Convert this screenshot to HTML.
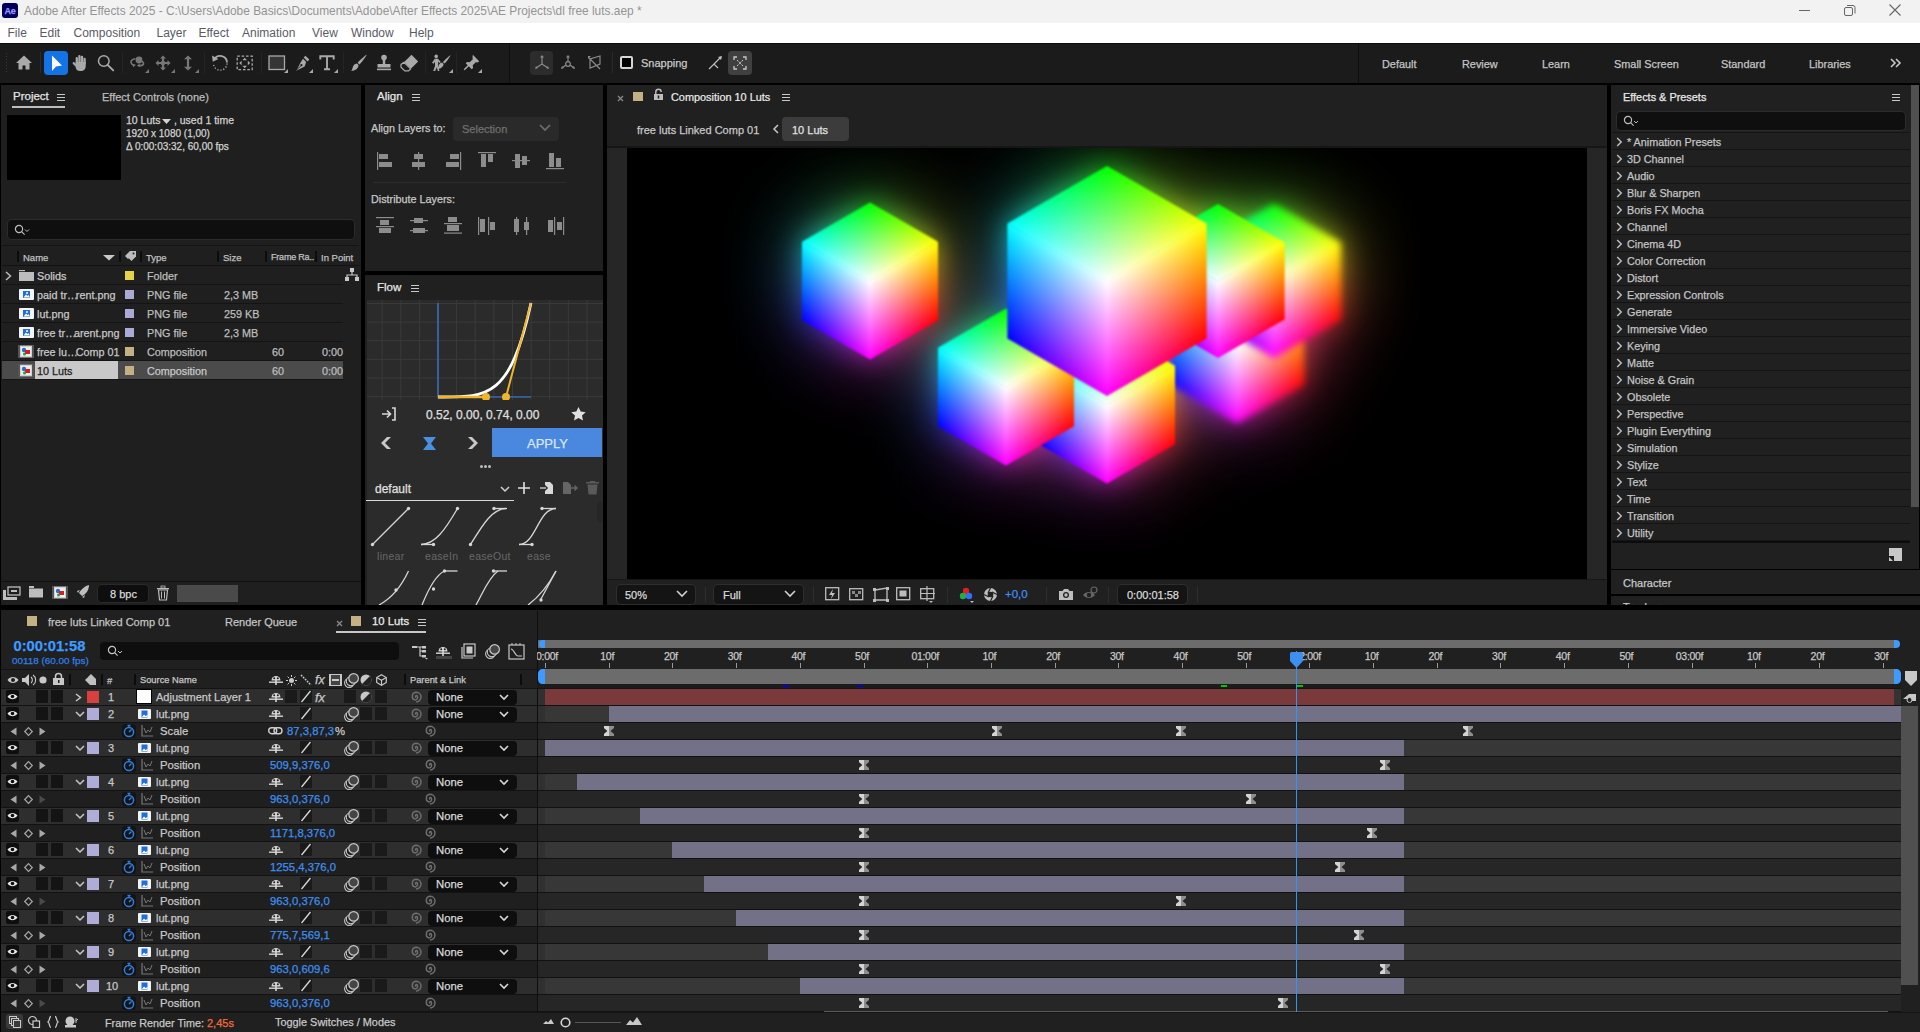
<!DOCTYPE html><html><head><meta charset="utf-8"><style>
html,body{margin:0;padding:0;width:1920px;height:1032px;overflow:hidden;background:#000;}
body{position:relative;font-family:"Liberation Sans",sans-serif;}
body>div,body>svg{position:absolute;}
.t{white-space:pre;-webkit-text-stroke:0.25px currentColor;}
svg{overflow:visible}
</style></head><body>
<div style="left:0px;top:0px;width:1920px;height:23px;background:#f2f2f2;"></div>
<div style="left:2px;top:3px;width:16px;height:15px;background:#00005b;border-radius:3px"></div>
<div class="t" style="left:4.5px;top:6.88px;font-size:9px;line-height:9px;color:#9999ff;font-weight:700;letter-spacing:-0.3px">Ae</div>
<div class="t" style="left:24px;top:5.93px;font-size:11.9px;line-height:11.9px;color:#949494;font-weight:400;-webkit-text-stroke:0">Adobe After Effects 2025 - C:\Users\Adobe Basics\Documents\Adobe\After Effects 2025\AE Projects\dl free luts.aep *</div>
<div style="left:1799px;top:10px;width:11px;height:1px;background:#666;"></div>
<svg style="left:1843px;top:3px;" width="14" height="14" viewBox="0 0 14 14"><rect x="1.5" y="4.5" width="8" height="8" rx="1.5" fill="none" stroke="#666"/><path d="M4 2.5h6a2 2 0 0 1 2 2v6" fill="none" stroke="#666"/></svg>
<svg style="left:1888px;top:3px;" width="14" height="14" viewBox="0 0 14 14"><path d="M1.5 1.5l11 11M12.5 1.5l-11 11" stroke="#666" stroke-width="1.1"/></svg>
<div style="left:0px;top:23px;width:1920px;height:20px;background:#ffffff;"></div>
<div class="t" style="left:7.5px;top:26.84px;font-size:12px;line-height:12px;color:#5a5a66;font-weight:400;-webkit-text-stroke:0">File</div>
<div class="t" style="left:39.5px;top:26.84px;font-size:12px;line-height:12px;color:#5a5a66;font-weight:400;-webkit-text-stroke:0">Edit</div>
<div class="t" style="left:73.5px;top:26.84px;font-size:12px;line-height:12px;color:#5a5a66;font-weight:400;-webkit-text-stroke:0">Composition</div>
<div class="t" style="left:156.5px;top:26.84px;font-size:12px;line-height:12px;color:#5a5a66;font-weight:400;-webkit-text-stroke:0">Layer</div>
<div class="t" style="left:198.5px;top:26.84px;font-size:12px;line-height:12px;color:#5a5a66;font-weight:400;-webkit-text-stroke:0">Effect</div>
<div class="t" style="left:242px;top:26.84px;font-size:12px;line-height:12px;color:#5a5a66;font-weight:400;-webkit-text-stroke:0">Animation</div>
<div class="t" style="left:312px;top:26.84px;font-size:12px;line-height:12px;color:#5a5a66;font-weight:400;-webkit-text-stroke:0">View</div>
<div class="t" style="left:351px;top:26.84px;font-size:12px;line-height:12px;color:#5a5a66;font-weight:400;-webkit-text-stroke:0">Window</div>
<div class="t" style="left:409px;top:26.84px;font-size:12px;line-height:12px;color:#5a5a66;font-weight:400;-webkit-text-stroke:0">Help</div>
<div style="left:0px;top:43px;width:1920px;height:40px;background:#1b1b1b;"></div>
<div style="left:0px;top:43px;width:1920px;height:1px;background:#0c0c0c;"></div>
<div style="left:0px;top:83px;width:1920px;height:2px;background:#000;"></div>
<div style="left:6px;top:53px;width:1px;height:1px;background:#3a3a3a;"></div>
<div style="left:6px;top:56px;width:1px;height:1px;background:#3a3a3a;"></div>
<div style="left:6px;top:59px;width:1px;height:1px;background:#3a3a3a;"></div>
<div style="left:6px;top:62px;width:1px;height:1px;background:#3a3a3a;"></div>
<div style="left:6px;top:65px;width:1px;height:1px;background:#3a3a3a;"></div>
<div style="left:6px;top:68px;width:1px;height:1px;background:#3a3a3a;"></div>
<div style="left:6px;top:71px;width:1px;height:1px;background:#3a3a3a;"></div>
<svg style="left:15px;top:54px;" width="18" height="17" viewBox="0 0 18 17"><path d="M9 1.5L1 9h2.5v6.5h4v-4h3v4h4V9H17z" fill="#a9a9a9"/></svg>
<div style="left:40px;top:52px;width:1px;height:21px;background:#2a2a2a;"></div>
<div style="left:44px;top:51px;width:24px;height:24px;background:#1473e6;border-radius:4px"></div>
<svg style="left:44px;top:51px;" width="24" height="24" viewBox="0 0 24 24"><path d="M8 4.5v15.5l4-4.5 6-1z" fill="#fff"/></svg>
<svg style="left:72px;top:54px;" width="17" height="18" viewBox="0 0 17 18"><g stroke="#a9a9a9" stroke-width="2.3" stroke-linecap="round" fill="none"><path d="M4.8 9V4.2M7.4 8.5V2.2M10 8.5V2.8M12.6 9.5V5"/><path d="M4 11.5L1.8 9.2"/></g><path d="M3.7 8h10v4.5c0 2.5-2 4.5-4.5 4.5H8c-2.5 0-4.3-1.5-4.3-4z" fill="#a9a9a9"/></svg>
<svg style="left:97px;top:54px;" width="18" height="18" viewBox="0 0 18 18"><circle cx="6.8" cy="7" r="5.3" fill="none" stroke="#a9a9a9" stroke-width="1.5"/><path d="M10.6 10.8l5.6 5.6" stroke="#a9a9a9" stroke-width="1.9" stroke-linecap="round"/></svg>
<div style="left:122px;top:52px;width:1px;height:21px;background:#242424;"></div>
<svg style="left:129px;top:54px;" width="20" height="20" viewBox="0 0 20 20"><circle cx="10" cy="6" r="3.4" fill="#777777"/><path d="M6.5 4.8C3.5 5 1.6 6.8 2 8.6c.3 1.3 1.6 2.2 3.4 2.6M9.5 11.6c2.4.1 4.6-.4 5-1.7.3-1-.3-2-1.6-2.7" stroke="#777777" stroke-width="1.6" fill="none"/><path d="M3.5 10l3.5 0.8-2.8 2.4zM10.5 9.6l-2.6 2.2 3.2 1.2z" fill="#777777"/></svg>
<svg style="left:145px;top:69px;" width="4" height="4" viewBox="0 0 4 4"><path d="M4 0v4H0z" fill="#777777"/></svg>
<svg style="left:155px;top:55px;" width="16" height="16" viewBox="0 0 16 16"><path d="M8 2.5v11M2.5 8h11" stroke="#777777" stroke-width="2.2"/><path d="M8 0.5l-3 3h6zM8 15.5l-3-3h6zM0.5 8l3-3v6zM15.5 8l-3-3v6z" fill="#777777"/><circle cx="8" cy="8" r="2.3" fill="#777777"/></svg>
<svg style="left:171px;top:69px;" width="4" height="4" viewBox="0 0 4 4"><path d="M4 0v4H0z" fill="#777777"/></svg>
<svg style="left:183px;top:55px;" width="10" height="16" viewBox="0 0 10 16"><path d="M5 2.5v11" stroke="#777777" stroke-width="2.2"/><path d="M5 0.5l-4 3.8h8zM5 15.5l-4-3.8h8z" fill="#777777"/></svg>
<svg style="left:195px;top:69px;" width="4" height="4" viewBox="0 0 4 4"><path d="M4 0v4H0z" fill="#777777"/></svg>
<div style="left:204px;top:52px;width:1px;height:21px;background:#242424;"></div>
<svg style="left:211px;top:54px;" width="18" height="18" viewBox="0 0 18 18"><path d="M3.2 5.5A6.8 6.8 0 0 1 16 8.5" stroke="#a9a9a9" stroke-width="1.8" fill="none"/><path d="M16 9.5A6.8 6.8 0 0 1 2.6 11" stroke="#a9a9a9" stroke-width="1.5" fill="none" stroke-dasharray="1.2 1.8"/><path d="M1 1.5l0.8 6.2 5.6-2.6z" fill="#a9a9a9"/></svg>
<svg style="left:236px;top:55px;" width="18" height="16" viewBox="0 0 18 16"><rect x="1.2" y="1.2" width="15" height="13.5" fill="none" stroke="#a9a9a9" stroke-width="1.3" stroke-dasharray="2.6 1.8"/><path d="M8.7 2.8l-2.3 2.4h4.6zM8.7 13.2l-2.3-2.4h4.6zM3.2 8l2.4-2.3v4.6zM14.2 8l-2.4-2.3v4.6z" fill="#a9a9a9"/></svg>
<div style="left:261px;top:52px;width:1px;height:21px;background:#242424;"></div>
<svg style="left:268px;top:55px;" width="18" height="16" viewBox="0 0 18 16"><rect x="1" y="1" width="15.5" height="13.5" fill="#353535" stroke="#a9a9a9" stroke-width="1.3"/></svg>
<svg style="left:284px;top:69px;" width="4" height="4" viewBox="0 0 4 4"><path d="M4 0v4H0z" fill="#a9a9a9"/></svg>
<svg style="left:294px;top:54px;" width="17" height="18" viewBox="0 0 17 18"><path d="M11.5 1.8l3.8 3.8-1.8 1.8-3.8-3.8z" fill="#a9a9a9"/><path d="M9 4.8l3.2 3.2-1.6 4.5-8.3 4.3 4.3-8.3z" fill="#a9a9a9"/><path d="M2.6 16l4-4" stroke="#1b1b1b" stroke-width="0.9"/><circle cx="7.4" cy="11.2" r="1.1" fill="#1b1b1b"/></svg>
<svg style="left:309px;top:69px;" width="4" height="4" viewBox="0 0 4 4"><path d="M4 0v4H0z" fill="#a9a9a9"/></svg>
<svg style="left:319px;top:55px;" width="16" height="16" viewBox="0 0 16 16"><path d="M1.3 4.5V1.3h13.4v3.2M8 1.3v13M5 14.2h6" fill="none" stroke="#a9a9a9" stroke-width="1.9"/></svg>
<svg style="left:334px;top:69px;" width="4" height="4" viewBox="0 0 4 4"><path d="M4 0v4H0z" fill="#a9a9a9"/></svg>
<div style="left:343px;top:52px;width:1px;height:21px;background:#242424;"></div>
<svg style="left:350px;top:54px;" width="18" height="18" viewBox="0 0 18 18"><path d="M16.6 0.8c.4.4-5.6 8.6-7.2 9.8l-1.8-1.8C8.8 7.2 16.2 .4 16.6 .8z" fill="#a9a9a9"/><path d="M7 9.6l1.5 1.5c0 3-2.5 5.5-7.3 5.9 1.5-1.5 1.2-4 2.4-5.6 1-1.3 2.3-1.6 3.4-1.8z" fill="#a9a9a9"/></svg>
<svg style="left:375px;top:54px;" width="18" height="18" viewBox="0 0 18 18"><circle cx="9" cy="3.6" r="2.8" fill="#a9a9a9"/><path d="M7.8 5.5h2.4v4.6h5.3v3.4H2.5v-3.4h5.3z" fill="#a9a9a9"/><rect x="2" y="14.6" width="14" height="1.6" fill="#a9a9a9"/></svg>
<svg style="left:400px;top:54px;" width="19" height="18" viewBox="0 0 19 18"><path d="M11.5 0.8l6.7 6.7-7.3 7.3-6.7-6.7z" fill="#a9a9a9"/><path d="M4 8.3l6.6 6.6-2 2H4.8L1 13.2v-2.8z" fill="none" stroke="#a9a9a9" stroke-width="1.2"/></svg>
<div style="left:425px;top:52px;width:1px;height:21px;background:#242424;"></div>
<svg style="left:431px;top:54px;" width="22" height="19" viewBox="0 0 22 19"><circle cx="5.2" cy="2.4" r="1.8" fill="#a9a9a9"/><path d="M3.8 4.8L1 8.8l1.6.9 1.4-2v4.2L2.2 17h1.9l1.8-3.8.9 3.8h1.6l-1.2-5.6V7.5l1.3 1.6 1.4-.9L7 4.8z" fill="#a9a9a9"/><path d="M19.5 1.2c.4.4-4.6 7.4-6 8.4l-1.6-1.6c1.2-1.4 7.2-7.2 7.6-6.8z" fill="#a9a9a9"/><path d="M11.2 8.6l1.3 1.3c0 2.6-2.1 4.6-6.2 5 1.3-1.3 1-3.3 2-4.7.9-1.1 2-1.4 2.9-1.6z" fill="#a9a9a9"/></svg>
<svg style="left:449px;top:69px;" width="4" height="4" viewBox="0 0 4 4"><path d="M4 0v4H0z" fill="#a9a9a9"/></svg>
<div style="left:456px;top:52px;width:1px;height:21px;background:#242424;"></div>
<svg style="left:463px;top:54px;" width="17" height="18" viewBox="0 0 17 18"><path d="M9.8 0.8l6.4 6.4-1.6 1.3-1.8-.3-3.1 3.1.4 2.6-1.4 1.4L2.7 9.3l1.4-1.4 2.6.4 3.1-3.1-.3-1.8z" fill="#a9a9a9"/><path d="M5.8 11.2L1.2 15.8" stroke="#a9a9a9" stroke-width="1.6"/></svg>
<svg style="left:478px;top:69px;" width="4" height="4" viewBox="0 0 4 4"><path d="M4 0v4H0z" fill="#a9a9a9"/></svg>
<div style="left:509px;top:43px;width:1px;height:40px;background:#0e0e0e;"></div>
<div style="left:530px;top:51px;width:23px;height:24px;background:#2c2c2c;border-radius:4px"></div>
<svg style="left:533px;top:54px;" width="18" height="18" viewBox="0 0 18 18"><path d="M9 2v8M9 10l-6 4M9 10l6 4" stroke="#8a8a8a" stroke-width="1.2" fill="none"/><path d="M9 1l-2 2.5h4zM2 15l1-3 2 2zM16 15l-1-3-2 2z" fill="#8a8a8a"/></svg>
<svg style="left:559px;top:54px;" width="18" height="18" viewBox="0 0 18 18"><path d="M9 2v6M7 11l-4 3M11 11l4 3" stroke="#8a8a8a" stroke-width="1.2" fill="none"/><circle cx="9" cy="10" r="2.3" fill="none" stroke="#8a8a8a" stroke-width="1.2"/><path d="M9 1l-2 2.5h4zM2 15l1-3 2 2zM16 15l-1-3-2 2z" fill="#8a8a8a"/></svg>
<svg style="left:586px;top:54px;" width="18" height="18" viewBox="0 0 18 18"><path d="M3 4l11 11M4 5v9l10-4V2z" stroke="#8a8a8a" stroke-width="1.2" fill="none"/><path d="M2 2l3 0-3 3z" fill="#8a8a8a"/></svg>
<div style="left:612px;top:52px;width:1px;height:21px;background:#2a2a2a;"></div>
<div style="left:620px;top:56px;width:13px;height:13px;background:#000;border:2px solid #d6d6d6;border-radius:2px;box-sizing:border-box"></div>
<div class="t" style="left:641px;top:57.69px;font-size:11px;line-height:11px;color:#c8c8c8;font-weight:400;">Snapping</div>
<svg style="left:706px;top:54px;" width="18" height="18" viewBox="0 0 18 18"><path d="M3 15l5-5 4 4M8 10l7-7" stroke="#c0c0c0" stroke-width="1.2" fill="none"/><path d="M16 2l-4 1 3 3z" fill="#c0c0c0"/></svg>
<div style="left:728px;top:51px;width:24px;height:24px;background:#404040;border-radius:4px"></div>
<svg style="left:731px;top:54px;" width="18" height="18" viewBox="0 0 18 18"><path d="M3 6V3h3M12 3h3v3M15 12v3h-3M6 15H3v-3" stroke="#c8c8c8" stroke-width="1.3" fill="none"/><circle cx="9" cy="9" r="1" fill="#c8c8c8"/><path d="M6 6l1.5 1.5M12 6l-1.5 1.5M6 12l1.5-1.5M12 12l-1.5-1.5" stroke="#c8c8c8" stroke-width="1"/></svg>
<div style="left:1358px;top:43px;width:1px;height:40px;background:#0e0e0e;"></div>
<div class="t" style="left:1382px;top:58.77px;font-size:10.9px;line-height:10.9px;color:#c4c4c4;font-weight:400;">Default</div>
<div class="t" style="left:1462px;top:58.77px;font-size:10.9px;line-height:10.9px;color:#c4c4c4;font-weight:400;">Review</div>
<div class="t" style="left:1542px;top:58.77px;font-size:10.9px;line-height:10.9px;color:#c4c4c4;font-weight:400;">Learn</div>
<div class="t" style="left:1614px;top:58.77px;font-size:10.9px;line-height:10.9px;color:#c4c4c4;font-weight:400;">Small Screen</div>
<div class="t" style="left:1721px;top:58.77px;font-size:10.9px;line-height:10.9px;color:#c4c4c4;font-weight:400;">Standard</div>
<div class="t" style="left:1809px;top:58.77px;font-size:10.9px;line-height:10.9px;color:#c4c4c4;font-weight:400;">Libraries</div>
<svg style="left:1889px;top:57px;" width="14" height="12" viewBox="0 0 14 12"><path d="M2 2l4 4-4 4M7 2l4 4-4 4" stroke="#c8c8c8" stroke-width="1.6" fill="none"/></svg>
<div style="left:1px;top:85px;width:360px;height:520px;background:#1f1f1f;"></div>
<div class="t" style="left:13px;top:91.27px;font-size:11.5px;line-height:11.5px;color:#e6e6e6;font-weight:400;">Project</div>
<div style="left:57px;top:94px;width:8px;height:1px;background:#c8c8c8;"></div>
<div style="left:57px;top:97px;width:8px;height:1px;background:#c8c8c8;"></div>
<div style="left:57px;top:100px;width:8px;height:1px;background:#c8c8c8;"></div>
<div style="left:12px;top:106px;width:53px;height:2px;background:#bdbdbd;"></div>
<div class="t" style="left:102px;top:91.69px;font-size:11px;line-height:11px;color:#bcbcbc;font-weight:400;">Effect Controls (none)</div>
<div style="left:7px;top:115px;width:114px;height:65px;background:#000;"></div>
<div class="t" style="left:126px;top:115.11px;font-size:10.5px;line-height:10.5px;color:#d2d2d2;font-weight:400;">10 Luts</div>
<svg style="left:162px;top:119px;" width="9" height="6" viewBox="0 0 9 6"><path d="M0 0h9l-4.5 5z" fill="#d2d2d2"/></svg>
<div class="t" style="left:171px;top:115.11px;font-size:10.5px;line-height:10.5px;color:#d2d2d2;font-weight:400;"> , used 1 time</div>
<div class="t" style="left:126px;top:129.03px;font-size:10px;line-height:10px;color:#d2d2d2;font-weight:400;">1920 x 1080 (1,00)</div>
<div class="t" style="left:126px;top:142.03px;font-size:10px;line-height:10px;color:#d2d2d2;font-weight:400;">Δ 0:00:03:32, 60,00 fps</div>
<div style="left:8px;top:220px;width:346px;height:19px;background:#0f0f0f;border-radius:4px;box-shadow:0 0 0 1px #2c2c2c"></div>
<svg style="left:14px;top:224px;" width="18" height="12" viewBox="0 0 18 12"><circle cx="5" cy="5" r="3.6" fill="none" stroke="#bdbdbd" stroke-width="1.2"/><path d="M7.6 7.6l3 3" stroke="#bdbdbd" stroke-width="1.2"/><path d="M11 5.5l2 2 2-2" stroke="#bdbdbd" stroke-width="1" fill="none"/></svg>
<div style="left:2px;top:245px;width:357px;height:1px;background:#141414;"></div>
<div style="left:2px;top:265px;width:357px;height:1px;background:#121212;"></div>
<div style="left:17px;top:251px;width:2px;height:11px;background:#0c0c0c;"></div>
<div style="left:119px;top:251px;width:2px;height:11px;background:#0c0c0c;"></div>
<div style="left:140px;top:251px;width:2px;height:11px;background:#0c0c0c;"></div>
<div style="left:217px;top:251px;width:2px;height:11px;background:#0c0c0c;"></div>
<div style="left:265px;top:251px;width:2px;height:11px;background:#0c0c0c;"></div>
<div style="left:315px;top:251px;width:2px;height:11px;background:#0c0c0c;"></div>
<div class="t" style="left:23px;top:252.96px;font-size:9.5px;line-height:9.5px;color:#c0c0c0;font-weight:400;">Name</div>
<svg style="left:103px;top:255px;" width="12" height="6" viewBox="0 0 12 6"><path d="M0 0h12l-6 5.5z" fill="#c8c8c8"/></svg>
<svg style="left:124px;top:251px;" width="14" height="12" viewBox="0 0 14 12"><path d="M1 5l5-5h3v3l-5 5z" transform="rotate(0)" fill="#bcbcbc"/><path d="M2 4.5L6.5 0H12v5.5L7.5 10z" fill="#bcbcbc"/><circle cx="9.5" cy="2.5" r="1" fill="#202020"/></svg>
<div class="t" style="left:146px;top:252.96px;font-size:9.5px;line-height:9.5px;color:#c0c0c0;font-weight:400;">Type</div>
<div class="t" style="left:223px;top:252.96px;font-size:9.5px;line-height:9.5px;color:#c0c0c0;font-weight:400;">Size</div>
<div class="t" style="left:271px;top:253.38px;font-size:9px;line-height:9px;color:#c0c0c0;font-weight:400;letter-spacing:-0.2px">Frame Ra..</div>
<div class="t" style="left:321px;top:252.96px;font-size:9.5px;line-height:9.5px;color:#c0c0c0;font-weight:400;">In Point</div>
<div style="left:2px;top:284px;width:341px;height:1px;background:#141414;"></div>
<svg style="left:5px;top:271px;" width="7" height="10" viewBox="0 0 7 10"><path d="M1 1l4.5 4L1 9" stroke="#bdbdbd" stroke-width="1.5" fill="none"/></svg>
<svg style="left:19px;top:270px;" width="15" height="11" viewBox="0 0 15 11"><rect x="0" y="0" width="6" height="1.2" fill="#bdbdbd"/><rect x="0" y="2" width="15" height="9" fill="#bdbdbd"/></svg>
<div class="t" style="left:37px;top:270.86px;font-size:10.8px;line-height:10.8px;color:#c8c8c8;font-weight:400;">Solids</div>
<div style="left:125px;top:271px;width:9px;height:9px;background:#e3d347;"></div>
<div class="t" style="left:147px;top:270.86px;font-size:10.8px;line-height:10.8px;color:#bdbdbd;font-weight:400;">Folder</div>
<div style="left:2px;top:303px;width:341px;height:1px;background:#141414;"></div>
<svg style="left:19px;top:289px;" width="15" height="11" viewBox="0 0 15 11"><rect x="0" y="0" width="15" height="11" rx="1" fill="#f4f4f4"/><rect x="4" y="2" width="7" height="7" fill="#1f6fd8"/><path d="M4.5 8.5l2.5-3 1.5 1.5 1-1 1.5 2.5z" fill="#fff"/><circle cx="8" cy="4" r="1" fill="#fff"/></svg>
<div class="t" style="left:37px;top:289.86px;font-size:10.8px;line-height:10.8px;color:#c8c8c8;font-weight:400;">paid tr<span style="letter-spacing:-2px">…</span>rent.png</div>
<div style="left:125px;top:290px;width:9px;height:9px;background:#aaaad6;"></div>
<div class="t" style="left:147px;top:289.86px;font-size:10.8px;line-height:10.8px;color:#bdbdbd;font-weight:400;">PNG file</div>
<div class="t" style="left:224px;top:289.86px;font-size:10.8px;line-height:10.8px;color:#bdbdbd;font-weight:400;">2,3 MB</div>
<div style="left:2px;top:322px;width:341px;height:1px;background:#141414;"></div>
<svg style="left:19px;top:308px;" width="15" height="11" viewBox="0 0 15 11"><rect x="0" y="0" width="15" height="11" rx="1" fill="#f4f4f4"/><rect x="4" y="2" width="7" height="7" fill="#1f6fd8"/><path d="M4.5 8.5l2.5-3 1.5 1.5 1-1 1.5 2.5z" fill="#fff"/><circle cx="8" cy="4" r="1" fill="#fff"/></svg>
<div class="t" style="left:37px;top:308.86px;font-size:10.8px;line-height:10.8px;color:#c8c8c8;font-weight:400;">lut.png</div>
<div style="left:125px;top:309px;width:9px;height:9px;background:#aaaad6;"></div>
<div class="t" style="left:147px;top:308.86px;font-size:10.8px;line-height:10.8px;color:#bdbdbd;font-weight:400;">PNG file</div>
<div class="t" style="left:224px;top:308.86px;font-size:10.8px;line-height:10.8px;color:#bdbdbd;font-weight:400;">259 KB</div>
<div style="left:2px;top:341px;width:341px;height:1px;background:#141414;"></div>
<svg style="left:19px;top:327px;" width="15" height="11" viewBox="0 0 15 11"><rect x="0" y="0" width="15" height="11" rx="1" fill="#f4f4f4"/><rect x="4" y="2" width="7" height="7" fill="#1f6fd8"/><path d="M4.5 8.5l2.5-3 1.5 1.5 1-1 1.5 2.5z" fill="#fff"/><circle cx="8" cy="4" r="1" fill="#fff"/></svg>
<div class="t" style="left:37px;top:327.86px;font-size:10.8px;line-height:10.8px;color:#c8c8c8;font-weight:400;">free tr<span style="letter-spacing:-2px">…</span>arent.png</div>
<div style="left:125px;top:328px;width:9px;height:9px;background:#aaaad6;"></div>
<div class="t" style="left:147px;top:327.86px;font-size:10.8px;line-height:10.8px;color:#bdbdbd;font-weight:400;">PNG file</div>
<div class="t" style="left:224px;top:327.86px;font-size:10.8px;line-height:10.8px;color:#bdbdbd;font-weight:400;">2,3 MB</div>
<div style="left:2px;top:360px;width:341px;height:1px;background:#141414;"></div>
<svg style="left:18px;top:345px;" width="16" height="13" viewBox="0 0 16 13"><rect x="0.5" y="0.5" width="15" height="12" fill="#d0d0d0" stroke="#777"/><rect x="0" y="0" width="2" height="13" fill="#555"/><rect x="14" y="0" width="2" height="13" fill="#555"/><rect x="3" y="2" width="10" height="9" fill="#eee"/><circle cx="6" cy="5" r="2.2" fill="#2a6fd0"/><rect x="7" y="5" width="5" height="4" fill="#d02020"/><circle cx="6.5" cy="9" r="1.5" fill="#20a040"/></svg>
<div class="t" style="left:37px;top:346.86px;font-size:10.8px;line-height:10.8px;color:#c8c8c8;font-weight:400;">free lu<span style="letter-spacing:-2px">…</span>Comp 01</div>
<div style="left:125px;top:347px;width:9px;height:9px;background:#c5af85;"></div>
<div class="t" style="left:147px;top:346.86px;font-size:10.8px;line-height:10.8px;color:#bdbdbd;font-weight:400;">Composition</div>
<div class="t" style="left:272px;top:346.86px;font-size:10.8px;line-height:10.8px;color:#bdbdbd;font-weight:400;">60</div>
<div class="t" style="left:322px;top:346.86px;font-size:10.8px;line-height:10.8px;color:#bdbdbd;font-weight:400;">0:00</div>
<div style="left:2px;top:361px;width:341px;height:19px;background:#4b4b4b;"></div>
<div style="left:35px;top:361px;width:83px;height:19px;background:#c9c9c9;"></div>
<div style="left:2px;top:379px;width:341px;height:1px;background:#141414;"></div>
<svg style="left:18px;top:364px;" width="16" height="13" viewBox="0 0 16 13"><rect x="0.5" y="0.5" width="15" height="12" fill="#d0d0d0" stroke="#777"/><rect x="0" y="0" width="2" height="13" fill="#555"/><rect x="14" y="0" width="2" height="13" fill="#555"/><rect x="3" y="2" width="10" height="9" fill="#eee"/><circle cx="6" cy="5" r="2.2" fill="#2a6fd0"/><rect x="7" y="5" width="5" height="4" fill="#d02020"/><circle cx="6.5" cy="9" r="1.5" fill="#20a040"/></svg>
<div class="t" style="left:37px;top:365.86px;font-size:10.8px;line-height:10.8px;color:#202020;font-weight:400;">10 Luts</div>
<div style="left:125px;top:366px;width:9px;height:9px;background:#c5af85;"></div>
<div class="t" style="left:147px;top:365.86px;font-size:10.8px;line-height:10.8px;color:#c8c8c8;font-weight:400;">Composition</div>
<div class="t" style="left:272px;top:365.86px;font-size:10.8px;line-height:10.8px;color:#bdbdbd;font-weight:400;">60</div>
<div class="t" style="left:322px;top:365.86px;font-size:10.8px;line-height:10.8px;color:#bdbdbd;font-weight:400;">0:00</div>
<svg style="left:345px;top:268px;" width="14" height="13" viewBox="0 0 14 13"><rect x="5" y="0" width="4" height="4" fill="#c8c8c8"/><path d="M7 4v3M2 10V7h10v3" stroke="#c8c8c8" stroke-width="1.2" fill="none"/><rect x="0" y="9" width="4" height="4" fill="#c8c8c8"/><rect x="10" y="9" width="4" height="4" fill="#c8c8c8"/></svg>
<div style="left:1px;top:581px;width:360px;height:1px;background:#121212;"></div>
<svg style="left:3px;top:586px;" width="18" height="14" viewBox="0 0 18 14"><rect x="5" y="1" width="12" height="8" fill="none" stroke="#bdbdbd" stroke-width="1.3"/><rect x="8" y="4" width="6" height="2" fill="#bdbdbd"/><rect x="0" y="4" width="3" height="10" fill="#bdbdbd"/><rect x="0" y="11" width="14" height="3" fill="#bdbdbd"/></svg>
<svg style="left:29px;top:586px;" width="14" height="12" viewBox="0 0 14 12"><rect x="0" y="0" width="5" height="2" fill="#bdbdbd"/><rect x="0" y="2.5" width="14" height="9" fill="#bdbdbd"/></svg>
<svg style="left:52px;top:586px;" width="16" height="13" viewBox="0 0 16 13"><rect x="0.5" y="0.5" width="15" height="12" fill="#d0d0d0" stroke="#777"/><rect x="0" y="0" width="2" height="13" fill="#555"/><rect x="14" y="0" width="2" height="13" fill="#555"/><rect x="3" y="2" width="10" height="9" fill="#eee"/><circle cx="6" cy="5" r="2.2" fill="#2a6fd0"/><rect x="7" y="5" width="5" height="4" fill="#d02020"/><circle cx="6.5" cy="9" r="1.5" fill="#20a040"/></svg>
<svg style="left:76px;top:585px;" width="14" height="14" viewBox="0 0 14 14"><path d="M13 0C9 1 5 4 3 8l3 3c4-2 7-6 7-11z" fill="#bdbdbd"/><path d="M1 6l3-1-2 3zM8 13l1-3-3 2z" fill="#bdbdbd"/></svg>
<div style="left:98px;top:585px;width:50px;height:17px;background:#0e0e0e;border-radius:4px;box-shadow:0 0 0 1px #2a2a2a"></div>
<div class="t" style="left:110px;top:588.69px;font-size:11px;line-height:11px;color:#d8d8d8;font-weight:400;">8 bpc</div>
<svg style="left:157px;top:586px;" width="12" height="14" viewBox="0 0 12 14"><rect x="0" y="2" width="12" height="1.3" fill="#bdbdbd"/><rect x="4" y="0" width="4" height="2" fill="none" stroke="#bdbdbd" stroke-width="0.8"/><path d="M1.5 4h9l-1 10h-7z" fill="none" stroke="#bdbdbd" stroke-width="1.2"/><path d="M4.5 5.5v7M7.5 5.5v7" stroke="#bdbdbd"/></svg>
<div style="left:177px;top:585px;width:61px;height:17px;background:#4a4a4a;"></div>
<div style="left:365px;top:85px;width:238px;height:186px;background:#202020;"></div>
<div class="t" style="left:377px;top:91.27px;font-size:11.5px;line-height:11.5px;color:#e6e6e6;font-weight:400;">Align</div>
<div style="left:412px;top:94px;width:8px;height:1px;background:#c8c8c8;"></div>
<div style="left:412px;top:97px;width:8px;height:1px;background:#c8c8c8;"></div>
<div style="left:412px;top:100px;width:8px;height:1px;background:#c8c8c8;"></div>
<div class="t" style="left:371px;top:122.86px;font-size:10.8px;line-height:10.8px;color:#c8c8c8;font-weight:400;">Align Layers to:</div>
<div style="left:453px;top:117px;width:106px;height:24px;background:#2a2a2a;border-radius:4px"></div>
<div class="t" style="left:462px;top:123.69px;font-size:11px;line-height:11px;color:#6f6f6f;font-weight:400;">Selection</div>
<svg style="left:539px;top:124px;" width="12" height="8" viewBox="0 0 12 8"><path d="M1 1l5 5 5-5" stroke="#707070" stroke-width="1.6" fill="none"/></svg>
<svg style="left:377px;top:152px;" width="18" height="18" viewBox="0 0 18 18"><rect x="0" y="0" width="1.2" height="18" fill="#8c8c8c"/><rect x="2" y="2" width="9" height="5" fill="#8c8c8c"/><rect x="2" y="10" width="13" height="5" fill="#8c8c8c"/></svg>
<svg style="left:411px;top:152px;" width="18" height="18" viewBox="0 0 18 18"><rect x="7" y="0" width="1.2" height="18" fill="#8c8c8c"/><rect x="3" y="2" width="9" height="5" fill="#8c8c8c"/><rect x="1" y="10" width="13" height="5" fill="#8c8c8c"/></svg>
<svg style="left:446px;top:152px;" width="18" height="18" viewBox="0 0 18 18"><rect x="14" y="0" width="1.2" height="18" fill="#8c8c8c"/><rect x="4" y="2" width="9" height="5" fill="#8c8c8c"/><rect x="0" y="10" width="13" height="5" fill="#8c8c8c"/></svg>
<svg style="left:478px;top:152px;" width="18" height="18" viewBox="0 0 18 18"><rect x="0" y="0" width="18" height="1.2" fill="#8c8c8c"/><rect x="3" y="2" width="5" height="13" fill="#8c8c8c"/><rect x="10" y="2" width="5" height="8" fill="#8c8c8c"/></svg>
<svg style="left:512px;top:152px;" width="18" height="18" viewBox="0 0 18 18"><rect x="0" y="8" width="18" height="1.2" fill="#8c8c8c"/><rect x="3" y="2" width="5" height="14" fill="#8c8c8c"/><rect x="10" y="4" width="5" height="9" fill="#8c8c8c"/></svg>
<svg style="left:546px;top:152px;" width="18" height="18" viewBox="0 0 18 18"><rect x="0" y="16" width="18" height="1.2" fill="#8c8c8c"/><rect x="3" y="1" width="5" height="14" fill="#8c8c8c"/><rect x="10" y="6" width="5" height="9" fill="#8c8c8c"/></svg>
<div style="left:373px;top:182px;width:193px;height:1px;background:#2c2c2c;"></div>
<div class="t" style="left:371px;top:193.86px;font-size:10.8px;line-height:10.8px;color:#c8c8c8;font-weight:400;">Distribute Layers:</div>
<svg style="left:376px;top:217px;" width="18" height="18" viewBox="0 0 18 18"><rect x="0" y="0" width="18" height="1.2" fill="#8c8c8c"/><rect x="4" y="3" width="9" height="5" fill="#8c8c8c"/><rect x="0" y="9" width="18" height="1.2" fill="#8c8c8c"/><rect x="3" y="11" width="12" height="5" fill="#8c8c8c"/></svg>
<svg style="left:410px;top:217px;" width="18" height="18" viewBox="0 0 18 18"><rect x="0" y="3" width="18" height="1.2" fill="#8c8c8c"/><rect x="4" y="1" width="9" height="5" fill="#8c8c8c"/><rect x="0" y="13" width="18" height="1.2" fill="#8c8c8c"/><rect x="3" y="11" width="12" height="5" fill="#8c8c8c"/></svg>
<svg style="left:444px;top:217px;" width="18" height="18" viewBox="0 0 18 18"><rect x="4" y="0" width="9" height="5" fill="#8c8c8c"/><rect x="0" y="6" width="18" height="1.2" fill="#8c8c8c"/><rect x="3" y="8" width="12" height="6" fill="#8c8c8c"/><rect x="0" y="15.5" width="18" height="1.2" fill="#8c8c8c"/></svg>
<svg style="left:478px;top:217px;" width="18" height="18" viewBox="0 0 18 18"><rect x="0" y="0" width="1.2" height="18" fill="#8c8c8c"/><rect x="2" y="2" width="5" height="13" fill="#8c8c8c"/><rect x="10" y="0" width="1.2" height="18" fill="#8c8c8c"/><rect x="12" y="5" width="5" height="8" fill="#8c8c8c"/></svg>
<svg style="left:513px;top:217px;" width="18" height="18" viewBox="0 0 18 18"><rect x="3" y="0" width="1.2" height="18" fill="#8c8c8c"/><rect x="1" y="2" width="5" height="13" fill="#8c8c8c"/><rect x="13" y="0" width="1.2" height="18" fill="#8c8c8c"/><rect x="11" y="5" width="5" height="8" fill="#8c8c8c"/></svg>
<svg style="left:547px;top:217px;" width="18" height="18" viewBox="0 0 18 18"><rect x="1" y="3" width="5" height="12" fill="#8c8c8c"/><rect x="7" y="0" width="1.2" height="18" fill="#8c8c8c"/><rect x="10" y="5" width="5" height="8" fill="#8c8c8c"/><rect x="16" y="0" width="1.2" height="18" fill="#8c8c8c"/></svg>
<div style="left:365px;top:275px;width:238px;height:330px;background:#202020;"></div>
<div class="t" style="left:377px;top:282.27px;font-size:11.5px;line-height:11.5px;color:#e6e6e6;font-weight:400;">Flow</div>
<div style="left:411px;top:285px;width:8px;height:1px;background:#c8c8c8;"></div>
<div style="left:411px;top:288px;width:8px;height:1px;background:#c8c8c8;"></div>
<div style="left:411px;top:291px;width:8px;height:1px;background:#c8c8c8;"></div>
<div style="left:367px;top:300px;width:236px;height:305px;background:#2b2b2b;"></div>
<svg style="left:367px;top:300px;" width="236" height="100" viewBox="0 0 236 100"><rect x="14.6" y="0" width="1" height="100" fill="#3a3a3a"/><rect x="33.3" y="0" width="1" height="100" fill="#3a3a3a"/><rect x="51.9" y="0" width="1" height="100" fill="#3a3a3a"/><rect x="70.5" y="0" width="1" height="100" fill="#3a3a3a"/><rect x="89.1" y="0" width="1" height="100" fill="#3a3a3a"/><rect x="107.7" y="0" width="1" height="100" fill="#3a3a3a"/><rect x="126.4" y="0" width="1" height="100" fill="#3a3a3a"/><rect x="145.0" y="0" width="1" height="100" fill="#3a3a3a"/><rect x="163.6" y="0" width="1" height="100" fill="#3a3a3a"/><rect x="182.2" y="0" width="1" height="100" fill="#3a3a3a"/><rect x="200.8" y="0" width="1" height="100" fill="#3a3a3a"/><rect x="219.5" y="0" width="1" height="100" fill="#3a3a3a"/><rect x="0" y="3.0" width="236" height="1" fill="#3a3a3a"/><rect x="0" y="21.6" width="236" height="1" fill="#3a3a3a"/><rect x="0" y="40.2" width="236" height="1" fill="#3a3a3a"/><rect x="0" y="58.9" width="236" height="1" fill="#3a3a3a"/><rect x="0" y="77.5" width="236" height="1" fill="#3a3a3a"/><rect x="0" y="96.1" width="236" height="1" fill="#3a3a3a"/></svg>
<svg style="left:367px;top:300px;" width="236" height="110" viewBox="0 0 236 110"><path d="M71 3v94h93" stroke="#3d7fe6" stroke-width="1.2" fill="none"/><path d="M71 97C119 97 143 100 164 3" stroke="#ffffff" stroke-width="2.8" fill="none"/><path d="M71 97h48" stroke="#f0b429" stroke-width="2.6"/><circle cx="119" cy="97" r="4" fill="#f0b429"/><path d="M164 3L139 97" stroke="#f0b429" stroke-width="2"/><circle cx="139" cy="97" r="4" fill="#f0b429"/></svg>
<div style="left:367px;top:400px;width:236px;height:205px;background:#2b2b2b;"></div>
<svg style="left:381px;top:407px;" width="16" height="14" viewBox="0 0 16 14"><path d="M1 7h8M6 3.5L9.5 7 6 10.5" stroke="#d8d8d8" stroke-width="1.6" fill="none"/><path d="M11 1h3v12h-3" stroke="#d8d8d8" stroke-width="1.6" fill="none"/></svg>
<div class="t" style="left:426px;top:408.84px;font-size:12px;line-height:12px;color:#e0e0e0;font-weight:400;">0.52, 0.00, 0.74, 0.00</div>
<svg style="left:571px;top:407px;" width="15" height="14" viewBox="0 0 15 14"><path d="M7.5 0l2.2 4.6 5 .6-3.7 3.4 1 5-4.5-2.5-4.5 2.5 1-5L.3 5.2l5-.6z" fill="#e0e0e0"/></svg>
<svg style="left:381px;top:437px;" width="13" height="12" viewBox="0 0 13 12"><path d="M6 0L0 6l6 6h4L4 6l6-6z" fill="#c8c8c8"/></svg>
<svg style="left:423px;top:437px;" width="13" height="13" viewBox="0 0 13 13"><path d="M0 0h13l-5 6.5 5 6.5H0l5-6.5z" fill="#4a90e2"/></svg>
<svg style="left:465px;top:437px;" width="13" height="12" viewBox="0 0 13 12"><path d="M3 0h4l6 6-6 6H3l6-6z" fill="#c8c8c8"/></svg>
<div style="left:492px;top:428px;width:110px;height:29px;background:#4a88e0;"></div>
<div class="t" style="left:527px;top:437.00px;font-size:13px;line-height:13px;color:#dbe6f7;font-weight:400;">APPLY</div>
<div style="left:480px;top:465px;width:3px;height:3px;background:#bdbdbd;border-radius:2px"></div>
<div style="left:484px;top:465px;width:3px;height:3px;background:#bdbdbd;border-radius:2px"></div>
<div style="left:488px;top:465px;width:3px;height:3px;background:#bdbdbd;border-radius:2px"></div>
<div class="t" style="left:375px;top:482.84px;font-size:12px;line-height:12px;color:#e0e0e0;font-weight:400;">default</div>
<svg style="left:500px;top:486px;" width="10" height="7" viewBox="0 0 10 7"><path d="M1 1l4 4 4-4" stroke="#d0d0d0" stroke-width="1.5" fill="none"/></svg>
<div style="left:366px;top:500px;width:148px;height:1.2px;background:#d8d8d8;"></div>
<svg style="left:518px;top:482px;" width="12" height="12" viewBox="0 0 12 12"><path d="M6 0v12M0 6h12" stroke="#e0e0e0" stroke-width="1.6"/></svg>
<svg style="left:540px;top:481px;" width="14" height="14" viewBox="0 0 14 14"><path d="M5 1h5l3 3v9H5v-3" fill="#d8d8d8"/><path d="M0 7h7M4.5 4.5L7 7 4.5 9.5" stroke="#2b2b2b" stroke-width="1.6" fill="none"/><path d="M0 7h6" stroke="#d8d8d8" stroke-width="1.3"/></svg>
<svg style="left:562px;top:481px;" width="16" height="14" viewBox="0 0 16 14"><path d="M1 1h5l3 3v9H1z" fill="#666"/><path d="M8 7h7M12.5 4.5L15 7l-2.5 2.5" stroke="#666" stroke-width="1.3" fill="none"/></svg>
<svg style="left:586px;top:481px;" width="13" height="14" viewBox="0 0 13 14"><rect x="0" y="1" width="13" height="1.5" fill="#5a5a5a"/><rect x="4" y="0" width="5" height="2" fill="#5a5a5a"/><path d="M1.5 3.5h10l-1 10h-8z" fill="#5a5a5a"/></svg>
<svg style="left:360px;top:490px;overflow:hidden" width="250" height="115" viewBox="0 0 250 115"><path d="M12.5 54.5L48.5 18.5" stroke="#d6d6d6" stroke-width="1.3" fill="none"/><circle cx="12.5" cy="54.5" r="1.7" fill="#d6d6d6"/><circle cx="48.5" cy="18.5" r="1.7" fill="#d6d6d6"/><path d="M61 54.5h12.5" stroke="#d6d6d6" stroke-width="1.3" fill="none"/><circle cx="73.5" cy="54.5" r="1.7" fill="#d6d6d6"/><path d="M61 54.5C75 54.5 85 40 97.5 18.5" stroke="#d6d6d6" stroke-width="1.3" fill="none"/><circle cx="97.5" cy="18.5" r="1.7" fill="#d6d6d6"/><circle cx="110.5" cy="54.5" r="1.7" fill="#d6d6d6"/><path d="M110.5 54.5C122 36 132 18.5 146 18.5" stroke="#d6d6d6" stroke-width="1.3" fill="none"/><path d="M134 18.5h13" stroke="#d6d6d6" stroke-width="1.3" fill="none"/><circle cx="134" cy="18.5" r="1.7" fill="#d6d6d6"/><path d="M159 54.5h13" stroke="#d6d6d6" stroke-width="1.3" fill="none"/><circle cx="172" cy="54.5" r="1.7" fill="#d6d6d6"/><path d="M159 54.5C176 54.5 178 18.5 196 18.5" stroke="#d6d6d6" stroke-width="1.3" fill="none"/><path d="M182 18.5h14" stroke="#d6d6d6" stroke-width="1.3" fill="none"/><circle cx="182" cy="18.5" r="1.7" fill="#d6d6d6"/><path d="M19 115C32 108 42 95 48.5 81" stroke="#d6d6d6" stroke-width="1.3" fill="none"/><circle cx="36" cy="100" r="1.7" fill="#d6d6d6"/><path d="M62 115C68 100 76 85 84.5 81" stroke="#d6d6d6" stroke-width="1.3" fill="none"/><path d="M84.5 81h13" stroke="#d6d6d6" stroke-width="1.3" fill="none"/><circle cx="84.5" cy="81" r="1.7" fill="#d6d6d6"/><circle cx="73.5" cy="99" r="1.7" fill="#d6d6d6"/><path d="M116 115C122 105 128 88 138 81" stroke="#d6d6d6" stroke-width="1.3" fill="none"/><path d="M133.5 81h13.5" stroke="#d6d6d6" stroke-width="1.3" fill="none"/><circle cx="133.5" cy="81" r="1.7" fill="#d6d6d6"/><path d="M168 115C180 106 188 96 196 81" stroke="#d6d6d6" stroke-width="1.3" fill="none"/><path d="M181 109L196 81" stroke="#d6d6d6" stroke-width="1.3" fill="none"/><circle cx="181" cy="110" r="1.7" fill="#d6d6d6"/></svg>
<div class="t" style="left:377px;top:551.11px;font-size:10.5px;line-height:10.5px;color:#686868;font-weight:400;-webkit-text-stroke:0;letter-spacing:0.3px">linear</div>
<div class="t" style="left:425px;top:551.11px;font-size:10.5px;line-height:10.5px;color:#686868;font-weight:400;-webkit-text-stroke:0;letter-spacing:0.3px">easeIn</div>
<div class="t" style="left:469px;top:551.11px;font-size:10.5px;line-height:10.5px;color:#686868;font-weight:400;-webkit-text-stroke:0;letter-spacing:0.3px">easeOut</div>
<div class="t" style="left:527px;top:551.11px;font-size:10.5px;line-height:10.5px;color:#686868;font-weight:400;-webkit-text-stroke:0;letter-spacing:0.3px">ease</div>
<div style="left:597px;top:502px;width:6px;height:20px;background:#262626;"></div>
<div style="left:607px;top:85px;width:1000px;height:520px;background:#202020;"></div>
<svg style="left:617px;top:95px;" width="7" height="7" viewBox="0 0 7 7"><path d="M1 1l5 5M6 1l-5 5" stroke="#8a8a8a" stroke-width="1.3"/></svg>
<div style="left:633px;top:92px;width:10px;height:9px;background:#c5af85;"></div>
<svg style="left:654px;top:89px;" width="9" height="11" viewBox="0 0 9 11"><rect x="0" y="5" width="9" height="6" fill="#bdbdbd"/><path d="M1.8 5V3a2.7 2.7 0 0 1 5.4 0" stroke="#bdbdbd" stroke-width="1.4" fill="none"/><rect x="3.7" y="6.5" width="1.6" height="3" fill="#202020"/></svg>
<div class="t" style="left:671px;top:92.27px;font-size:10.9px;line-height:10.9px;color:#ececec;font-weight:400;-webkit-text-stroke:0.2px #ececec">Composition 10 Luts</div>
<div style="left:782px;top:94px;width:8px;height:1px;background:#c8c8c8;"></div>
<div style="left:782px;top:97px;width:8px;height:1px;background:#c8c8c8;"></div>
<div style="left:782px;top:100px;width:8px;height:1px;background:#c8c8c8;"></div>
<div class="t" style="left:637px;top:124.69px;font-size:11px;line-height:11px;color:#c8c8c8;font-weight:400;">free luts Linked Comp 01</div>
<svg style="left:772px;top:124px;" width="7" height="10" viewBox="0 0 7 10"><path d="M6 1L2 5l4 4" stroke="#c8c8c8" stroke-width="1.5" fill="none"/></svg>
<div style="left:782px;top:117px;width:67px;height:24px;background:#3c3c3c;border-radius:4px"></div>
<div class="t" style="left:792px;top:124.69px;font-size:11px;line-height:11px;color:#e0e0e0;font-weight:400;">10 Luts</div>
<div style="left:607px;top:146px;width:1000px;height:2px;background:#161616;"></div>
<div style="left:607px;top:148px;width:20px;height:431px;background:#262626;"></div>
<div style="left:1587px;top:148px;width:20px;height:431px;background:#262626;"></div>
<div style="left:627px;top:148px;width:960px;height:431px;background:#000;overflow:hidden"><div style="position:absolute;left:0;top:0;width:960px;height:431px;filter:blur(40px);opacity:0.7"><div style="position:absolute;left:543px;top:121px;width:134px;height:77px;background:linear-gradient(150.00deg,#000 33.5px,#ff0000 100.2px),linear-gradient(-150.00deg,#000 33.5px,#0000ff 100.2px),#00ff00;background-blend-mode:screen;clip-path:polygon(67.0px 0.0px,133.7px 38.5px,67.0px 77.0px,0.3px 38.5px);"></div><div style="position:absolute;left:543px;top:159px;width:67px;height:116px;background:linear-gradient(30.00deg,#000 33.5px,#00ff00 100.2px),linear-gradient(90.00deg,#000 0.3px,#ff0000 67.0px),#0000ff;background-blend-mode:screen;clip-path:polygon(0.3px 0.5px,67.0px 39.0px,67.0px 116.0px,0.3px 77.5px);"></div><div style="position:absolute;left:610px;top:159px;width:67px;height:116px;background:linear-gradient(-30.00deg,#000 33.5px,#00ff00 100.2px),linear-gradient(-90.00deg,#000 0.3px,#0000ff 67.0px),#ff0000;background-blend-mode:screen;clip-path:polygon(0.0px 39.0px,66.7px 0.5px,66.7px 77.5px,0.0px 116.0px);"></div><div style="position:absolute;left:580px;top:56px;width:134px;height:77px;background:linear-gradient(150.00deg,#000 33.5px,#ff0000 100.2px),linear-gradient(-150.00deg,#000 33.5px,#0000ff 100.2px),#00ff00;background-blend-mode:screen;clip-path:polygon(67.0px 0.0px,133.7px 38.5px,67.0px 77.0px,0.3px 38.5px);"></div><div style="position:absolute;left:580px;top:94px;width:67px;height:116px;background:linear-gradient(30.00deg,#000 33.5px,#00ff00 100.2px),linear-gradient(90.00deg,#000 0.3px,#ff0000 67.0px),#0000ff;background-blend-mode:screen;clip-path:polygon(0.3px 0.5px,67.0px 39.0px,67.0px 116.0px,0.3px 77.5px);"></div><div style="position:absolute;left:647px;top:94px;width:67px;height:116px;background:linear-gradient(-30.00deg,#000 33.5px,#00ff00 100.2px),linear-gradient(-90.00deg,#000 0.3px,#0000ff 67.0px),#ff0000;background-blend-mode:screen;clip-path:polygon(0.0px 39.0px,66.7px 0.5px,66.7px 77.5px,0.0px 116.0px);"></div><div style="position:absolute;left:524px;top:56px;width:134px;height:77px;background:linear-gradient(150.00deg,#000 33.5px,#ff0000 100.2px),linear-gradient(-150.00deg,#000 33.5px,#0000ff 100.2px),#00ff00;background-blend-mode:screen;clip-path:polygon(67.0px 0.0px,133.7px 38.5px,67.0px 77.0px,0.3px 38.5px);"></div><div style="position:absolute;left:524px;top:94px;width:67px;height:116px;background:linear-gradient(30.00deg,#000 33.5px,#00ff00 100.2px),linear-gradient(90.00deg,#000 0.3px,#ff0000 67.0px),#0000ff;background-blend-mode:screen;clip-path:polygon(0.3px 0.5px,67.0px 39.0px,67.0px 116.0px,0.3px 77.5px);"></div><div style="position:absolute;left:591px;top:94px;width:67px;height:116px;background:linear-gradient(-30.00deg,#000 33.5px,#00ff00 100.2px),linear-gradient(-90.00deg,#000 0.3px,#0000ff 67.0px),#ff0000;background-blend-mode:screen;clip-path:polygon(0.0px 39.0px,66.7px 0.5px,66.7px 77.5px,0.0px 116.0px);"></div><div style="position:absolute;left:412px;top:178px;width:136px;height:79px;background:linear-gradient(150.00deg,#000 34.4px,#ff0000 102.4px),linear-gradient(-150.00deg,#000 34.4px,#0000ff 102.4px),#00ff00;background-blend-mode:screen;clip-path:polygon(68.0px 0.5px,136.0px 39.8px,68.0px 79.0px,0.0px 39.8px);"></div><div style="position:absolute;left:412px;top:217px;width:68px;height:119px;background:linear-gradient(30.00deg,#000 34.4px,#00ff00 102.4px),linear-gradient(90.00deg,#000 0.0px,#ff0000 68.0px),#0000ff;background-blend-mode:screen;clip-path:polygon(0.0px 0.8px,68.0px 40.0px,68.0px 118.5px,0.0px 79.2px);"></div><div style="position:absolute;left:480px;top:217px;width:68px;height:119px;background:linear-gradient(-30.00deg,#000 34.4px,#00ff00 102.4px),linear-gradient(-90.00deg,#000 0.0px,#0000ff 68.0px),#ff0000;background-blend-mode:screen;clip-path:polygon(0.0px 40.0px,68.0px 0.8px,68.0px 79.2px,0.0px 118.5px);"></div><div style="position:absolute;left:311px;top:160px;width:136px;height:79px;background:linear-gradient(150.00deg,#000 34.4px,#ff0000 102.4px),linear-gradient(-150.00deg,#000 34.4px,#0000ff 102.4px),#00ff00;background-blend-mode:screen;clip-path:polygon(68.0px 0.5px,136.0px 39.8px,68.0px 79.0px,0.0px 39.8px);"></div><div style="position:absolute;left:311px;top:199px;width:68px;height:119px;background:linear-gradient(30.00deg,#000 34.4px,#00ff00 102.4px),linear-gradient(90.00deg,#000 0.0px,#ff0000 68.0px),#0000ff;background-blend-mode:screen;clip-path:polygon(0.0px 0.8px,68.0px 40.0px,68.0px 118.5px,0.0px 79.2px);"></div><div style="position:absolute;left:379px;top:199px;width:68px;height:119px;background:linear-gradient(-30.00deg,#000 34.4px,#00ff00 102.4px),linear-gradient(-90.00deg,#000 0.0px,#0000ff 68.0px),#ff0000;background-blend-mode:screen;clip-path:polygon(0.0px 40.0px,68.0px 0.8px,68.0px 79.2px,0.0px 118.5px);"></div><div style="position:absolute;left:380px;top:18px;width:200px;height:115px;background:linear-gradient(150.00deg,#000 50.0px,#ff0000 149.6px),linear-gradient(-150.00deg,#000 50.0px,#0000ff 149.6px),#00ff00;background-blend-mode:screen;clip-path:polygon(100.0px 0.0px,199.6px 57.5px,100.0px 115.0px,0.4px 57.5px);"></div><div style="position:absolute;left:380px;top:75px;width:100px;height:173px;background:linear-gradient(30.00deg,#000 50.0px,#00ff00 149.6px),linear-gradient(90.00deg,#000 0.4px,#ff0000 100.0px),#0000ff;background-blend-mode:screen;clip-path:polygon(0.4px 0.5px,100.0px 58.0px,100.0px 173.0px,0.4px 115.5px);"></div><div style="position:absolute;left:480px;top:75px;width:100px;height:173px;background:linear-gradient(-30.00deg,#000 50.0px,#00ff00 149.6px),linear-gradient(-90.00deg,#000 0.4px,#0000ff 100.0px),#ff0000;background-blend-mode:screen;clip-path:polygon(0.0px 58.0px,99.6px 0.5px,99.6px 115.5px,0.0px 173.0px);"></div><div style="position:absolute;left:175px;top:54px;width:136px;height:79px;background:linear-gradient(150.00deg,#000 34.4px,#ff0000 102.4px),linear-gradient(-150.00deg,#000 34.4px,#0000ff 102.4px),#00ff00;background-blend-mode:screen;clip-path:polygon(68.0px 0.5px,136.0px 39.8px,68.0px 79.0px,0.0px 39.8px);"></div><div style="position:absolute;left:175px;top:93px;width:68px;height:119px;background:linear-gradient(30.00deg,#000 34.4px,#00ff00 102.4px),linear-gradient(90.00deg,#000 0.0px,#ff0000 68.0px),#0000ff;background-blend-mode:screen;clip-path:polygon(0.0px 0.8px,68.0px 40.0px,68.0px 118.5px,0.0px 79.2px);"></div><div style="position:absolute;left:243px;top:93px;width:68px;height:119px;background:linear-gradient(-30.00deg,#000 34.4px,#00ff00 102.4px),linear-gradient(-90.00deg,#000 0.0px,#0000ff 68.0px),#ff0000;background-blend-mode:screen;clip-path:polygon(0.0px 40.0px,68.0px 0.8px,68.0px 79.2px,0.0px 118.5px);"></div></div><div style="position:absolute;left:0;top:0;width:960px;height:431px;filter:blur(14px);opacity:0.6"><div style="position:absolute;left:543px;top:121px;width:134px;height:77px;background:linear-gradient(150.00deg,#000 33.5px,#ff0000 100.2px),linear-gradient(-150.00deg,#000 33.5px,#0000ff 100.2px),#00ff00;background-blend-mode:screen;clip-path:polygon(67.0px 0.0px,133.7px 38.5px,67.0px 77.0px,0.3px 38.5px);"></div><div style="position:absolute;left:543px;top:159px;width:67px;height:116px;background:linear-gradient(30.00deg,#000 33.5px,#00ff00 100.2px),linear-gradient(90.00deg,#000 0.3px,#ff0000 67.0px),#0000ff;background-blend-mode:screen;clip-path:polygon(0.3px 0.5px,67.0px 39.0px,67.0px 116.0px,0.3px 77.5px);"></div><div style="position:absolute;left:610px;top:159px;width:67px;height:116px;background:linear-gradient(-30.00deg,#000 33.5px,#00ff00 100.2px),linear-gradient(-90.00deg,#000 0.3px,#0000ff 67.0px),#ff0000;background-blend-mode:screen;clip-path:polygon(0.0px 39.0px,66.7px 0.5px,66.7px 77.5px,0.0px 116.0px);"></div><div style="position:absolute;left:580px;top:56px;width:134px;height:77px;background:linear-gradient(150.00deg,#000 33.5px,#ff0000 100.2px),linear-gradient(-150.00deg,#000 33.5px,#0000ff 100.2px),#00ff00;background-blend-mode:screen;clip-path:polygon(67.0px 0.0px,133.7px 38.5px,67.0px 77.0px,0.3px 38.5px);"></div><div style="position:absolute;left:580px;top:94px;width:67px;height:116px;background:linear-gradient(30.00deg,#000 33.5px,#00ff00 100.2px),linear-gradient(90.00deg,#000 0.3px,#ff0000 67.0px),#0000ff;background-blend-mode:screen;clip-path:polygon(0.3px 0.5px,67.0px 39.0px,67.0px 116.0px,0.3px 77.5px);"></div><div style="position:absolute;left:647px;top:94px;width:67px;height:116px;background:linear-gradient(-30.00deg,#000 33.5px,#00ff00 100.2px),linear-gradient(-90.00deg,#000 0.3px,#0000ff 67.0px),#ff0000;background-blend-mode:screen;clip-path:polygon(0.0px 39.0px,66.7px 0.5px,66.7px 77.5px,0.0px 116.0px);"></div><div style="position:absolute;left:524px;top:56px;width:134px;height:77px;background:linear-gradient(150.00deg,#000 33.5px,#ff0000 100.2px),linear-gradient(-150.00deg,#000 33.5px,#0000ff 100.2px),#00ff00;background-blend-mode:screen;clip-path:polygon(67.0px 0.0px,133.7px 38.5px,67.0px 77.0px,0.3px 38.5px);"></div><div style="position:absolute;left:524px;top:94px;width:67px;height:116px;background:linear-gradient(30.00deg,#000 33.5px,#00ff00 100.2px),linear-gradient(90.00deg,#000 0.3px,#ff0000 67.0px),#0000ff;background-blend-mode:screen;clip-path:polygon(0.3px 0.5px,67.0px 39.0px,67.0px 116.0px,0.3px 77.5px);"></div><div style="position:absolute;left:591px;top:94px;width:67px;height:116px;background:linear-gradient(-30.00deg,#000 33.5px,#00ff00 100.2px),linear-gradient(-90.00deg,#000 0.3px,#0000ff 67.0px),#ff0000;background-blend-mode:screen;clip-path:polygon(0.0px 39.0px,66.7px 0.5px,66.7px 77.5px,0.0px 116.0px);"></div><div style="position:absolute;left:412px;top:178px;width:136px;height:79px;background:linear-gradient(150.00deg,#000 34.4px,#ff0000 102.4px),linear-gradient(-150.00deg,#000 34.4px,#0000ff 102.4px),#00ff00;background-blend-mode:screen;clip-path:polygon(68.0px 0.5px,136.0px 39.8px,68.0px 79.0px,0.0px 39.8px);"></div><div style="position:absolute;left:412px;top:217px;width:68px;height:119px;background:linear-gradient(30.00deg,#000 34.4px,#00ff00 102.4px),linear-gradient(90.00deg,#000 0.0px,#ff0000 68.0px),#0000ff;background-blend-mode:screen;clip-path:polygon(0.0px 0.8px,68.0px 40.0px,68.0px 118.5px,0.0px 79.2px);"></div><div style="position:absolute;left:480px;top:217px;width:68px;height:119px;background:linear-gradient(-30.00deg,#000 34.4px,#00ff00 102.4px),linear-gradient(-90.00deg,#000 0.0px,#0000ff 68.0px),#ff0000;background-blend-mode:screen;clip-path:polygon(0.0px 40.0px,68.0px 0.8px,68.0px 79.2px,0.0px 118.5px);"></div><div style="position:absolute;left:311px;top:160px;width:136px;height:79px;background:linear-gradient(150.00deg,#000 34.4px,#ff0000 102.4px),linear-gradient(-150.00deg,#000 34.4px,#0000ff 102.4px),#00ff00;background-blend-mode:screen;clip-path:polygon(68.0px 0.5px,136.0px 39.8px,68.0px 79.0px,0.0px 39.8px);"></div><div style="position:absolute;left:311px;top:199px;width:68px;height:119px;background:linear-gradient(30.00deg,#000 34.4px,#00ff00 102.4px),linear-gradient(90.00deg,#000 0.0px,#ff0000 68.0px),#0000ff;background-blend-mode:screen;clip-path:polygon(0.0px 0.8px,68.0px 40.0px,68.0px 118.5px,0.0px 79.2px);"></div><div style="position:absolute;left:379px;top:199px;width:68px;height:119px;background:linear-gradient(-30.00deg,#000 34.4px,#00ff00 102.4px),linear-gradient(-90.00deg,#000 0.0px,#0000ff 68.0px),#ff0000;background-blend-mode:screen;clip-path:polygon(0.0px 40.0px,68.0px 0.8px,68.0px 79.2px,0.0px 118.5px);"></div><div style="position:absolute;left:380px;top:18px;width:200px;height:115px;background:linear-gradient(150.00deg,#000 50.0px,#ff0000 149.6px),linear-gradient(-150.00deg,#000 50.0px,#0000ff 149.6px),#00ff00;background-blend-mode:screen;clip-path:polygon(100.0px 0.0px,199.6px 57.5px,100.0px 115.0px,0.4px 57.5px);"></div><div style="position:absolute;left:380px;top:75px;width:100px;height:173px;background:linear-gradient(30.00deg,#000 50.0px,#00ff00 149.6px),linear-gradient(90.00deg,#000 0.4px,#ff0000 100.0px),#0000ff;background-blend-mode:screen;clip-path:polygon(0.4px 0.5px,100.0px 58.0px,100.0px 173.0px,0.4px 115.5px);"></div><div style="position:absolute;left:480px;top:75px;width:100px;height:173px;background:linear-gradient(-30.00deg,#000 50.0px,#00ff00 149.6px),linear-gradient(-90.00deg,#000 0.4px,#0000ff 100.0px),#ff0000;background-blend-mode:screen;clip-path:polygon(0.0px 58.0px,99.6px 0.5px,99.6px 115.5px,0.0px 173.0px);"></div><div style="position:absolute;left:175px;top:54px;width:136px;height:79px;background:linear-gradient(150.00deg,#000 34.4px,#ff0000 102.4px),linear-gradient(-150.00deg,#000 34.4px,#0000ff 102.4px),#00ff00;background-blend-mode:screen;clip-path:polygon(68.0px 0.5px,136.0px 39.8px,68.0px 79.0px,0.0px 39.8px);"></div><div style="position:absolute;left:175px;top:93px;width:68px;height:119px;background:linear-gradient(30.00deg,#000 34.4px,#00ff00 102.4px),linear-gradient(90.00deg,#000 0.0px,#ff0000 68.0px),#0000ff;background-blend-mode:screen;clip-path:polygon(0.0px 0.8px,68.0px 40.0px,68.0px 118.5px,0.0px 79.2px);"></div><div style="position:absolute;left:243px;top:93px;width:68px;height:119px;background:linear-gradient(-30.00deg,#000 34.4px,#00ff00 102.4px),linear-gradient(-90.00deg,#000 0.0px,#0000ff 68.0px),#ff0000;background-blend-mode:screen;clip-path:polygon(0.0px 40.0px,68.0px 0.8px,68.0px 79.2px,0.0px 118.5px);"></div></div><div style="position:absolute;left:0;top:0;width:960px;height:431px;filter:blur(3.5px)"><div style="position:absolute;left:543px;top:121px;width:134px;height:77px;background:linear-gradient(150.00deg,#000 33.5px,#ff0000 100.2px),linear-gradient(-150.00deg,#000 33.5px,#0000ff 100.2px),#00ff00;background-blend-mode:screen;clip-path:polygon(67.0px 0.0px,133.7px 38.5px,67.0px 77.0px,0.3px 38.5px);"></div><div style="position:absolute;left:543px;top:159px;width:67px;height:116px;background:linear-gradient(30.00deg,#000 33.5px,#00ff00 100.2px),linear-gradient(90.00deg,#000 0.3px,#ff0000 67.0px),#0000ff;background-blend-mode:screen;clip-path:polygon(0.3px 0.5px,67.0px 39.0px,67.0px 116.0px,0.3px 77.5px);"></div><div style="position:absolute;left:610px;top:159px;width:67px;height:116px;background:linear-gradient(-30.00deg,#000 33.5px,#00ff00 100.2px),linear-gradient(-90.00deg,#000 0.3px,#0000ff 67.0px),#ff0000;background-blend-mode:screen;clip-path:polygon(0.0px 39.0px,66.7px 0.5px,66.7px 77.5px,0.0px 116.0px);"></div><div style="position:absolute;left:580px;top:56px;width:134px;height:77px;background:linear-gradient(150.00deg,#000 33.5px,#ff0000 100.2px),linear-gradient(-150.00deg,#000 33.5px,#0000ff 100.2px),#00ff00;background-blend-mode:screen;clip-path:polygon(67.0px 0.0px,133.7px 38.5px,67.0px 77.0px,0.3px 38.5px);"></div><div style="position:absolute;left:580px;top:94px;width:67px;height:116px;background:linear-gradient(30.00deg,#000 33.5px,#00ff00 100.2px),linear-gradient(90.00deg,#000 0.3px,#ff0000 67.0px),#0000ff;background-blend-mode:screen;clip-path:polygon(0.3px 0.5px,67.0px 39.0px,67.0px 116.0px,0.3px 77.5px);"></div><div style="position:absolute;left:647px;top:94px;width:67px;height:116px;background:linear-gradient(-30.00deg,#000 33.5px,#00ff00 100.2px),linear-gradient(-90.00deg,#000 0.3px,#0000ff 67.0px),#ff0000;background-blend-mode:screen;clip-path:polygon(0.0px 39.0px,66.7px 0.5px,66.7px 77.5px,0.0px 116.0px);"></div></div><div style="position:absolute;left:0;top:0;width:960px;height:431px;filter:blur(0.8px)"><div style="position:absolute;left:524px;top:56px;width:134px;height:77px;background:linear-gradient(150.00deg,#000 33.5px,#ff0000 100.2px),linear-gradient(-150.00deg,#000 33.5px,#0000ff 100.2px),#00ff00;background-blend-mode:screen;clip-path:polygon(67.0px 0.0px,133.7px 38.5px,67.0px 77.0px,0.3px 38.5px);"></div><div style="position:absolute;left:524px;top:94px;width:67px;height:116px;background:linear-gradient(30.00deg,#000 33.5px,#00ff00 100.2px),linear-gradient(90.00deg,#000 0.3px,#ff0000 67.0px),#0000ff;background-blend-mode:screen;clip-path:polygon(0.3px 0.5px,67.0px 39.0px,67.0px 116.0px,0.3px 77.5px);"></div><div style="position:absolute;left:591px;top:94px;width:67px;height:116px;background:linear-gradient(-30.00deg,#000 33.5px,#00ff00 100.2px),linear-gradient(-90.00deg,#000 0.3px,#0000ff 67.0px),#ff0000;background-blend-mode:screen;clip-path:polygon(0.0px 39.0px,66.7px 0.5px,66.7px 77.5px,0.0px 116.0px);"></div><div style="position:absolute;left:412px;top:178px;width:136px;height:79px;background:linear-gradient(150.00deg,#000 34.4px,#ff0000 102.4px),linear-gradient(-150.00deg,#000 34.4px,#0000ff 102.4px),#00ff00;background-blend-mode:screen;clip-path:polygon(68.0px 0.5px,136.0px 39.8px,68.0px 79.0px,0.0px 39.8px);"></div><div style="position:absolute;left:412px;top:217px;width:68px;height:119px;background:linear-gradient(30.00deg,#000 34.4px,#00ff00 102.4px),linear-gradient(90.00deg,#000 0.0px,#ff0000 68.0px),#0000ff;background-blend-mode:screen;clip-path:polygon(0.0px 0.8px,68.0px 40.0px,68.0px 118.5px,0.0px 79.2px);"></div><div style="position:absolute;left:480px;top:217px;width:68px;height:119px;background:linear-gradient(-30.00deg,#000 34.4px,#00ff00 102.4px),linear-gradient(-90.00deg,#000 0.0px,#0000ff 68.0px),#ff0000;background-blend-mode:screen;clip-path:polygon(0.0px 40.0px,68.0px 0.8px,68.0px 79.2px,0.0px 118.5px);"></div><div style="position:absolute;left:311px;top:160px;width:136px;height:79px;background:linear-gradient(150.00deg,#000 34.4px,#ff0000 102.4px),linear-gradient(-150.00deg,#000 34.4px,#0000ff 102.4px),#00ff00;background-blend-mode:screen;clip-path:polygon(68.0px 0.5px,136.0px 39.8px,68.0px 79.0px,0.0px 39.8px);"></div><div style="position:absolute;left:311px;top:199px;width:68px;height:119px;background:linear-gradient(30.00deg,#000 34.4px,#00ff00 102.4px),linear-gradient(90.00deg,#000 0.0px,#ff0000 68.0px),#0000ff;background-blend-mode:screen;clip-path:polygon(0.0px 0.8px,68.0px 40.0px,68.0px 118.5px,0.0px 79.2px);"></div><div style="position:absolute;left:379px;top:199px;width:68px;height:119px;background:linear-gradient(-30.00deg,#000 34.4px,#00ff00 102.4px),linear-gradient(-90.00deg,#000 0.0px,#0000ff 68.0px),#ff0000;background-blend-mode:screen;clip-path:polygon(0.0px 40.0px,68.0px 0.8px,68.0px 79.2px,0.0px 118.5px);"></div><div style="position:absolute;left:380px;top:18px;width:200px;height:115px;background:linear-gradient(150.00deg,#000 50.0px,#ff0000 149.6px),linear-gradient(-150.00deg,#000 50.0px,#0000ff 149.6px),#00ff00;background-blend-mode:screen;clip-path:polygon(100.0px 0.0px,199.6px 57.5px,100.0px 115.0px,0.4px 57.5px);"></div><div style="position:absolute;left:380px;top:75px;width:100px;height:173px;background:linear-gradient(30.00deg,#000 50.0px,#00ff00 149.6px),linear-gradient(90.00deg,#000 0.4px,#ff0000 100.0px),#0000ff;background-blend-mode:screen;clip-path:polygon(0.4px 0.5px,100.0px 58.0px,100.0px 173.0px,0.4px 115.5px);"></div><div style="position:absolute;left:480px;top:75px;width:100px;height:173px;background:linear-gradient(-30.00deg,#000 50.0px,#00ff00 149.6px),linear-gradient(-90.00deg,#000 0.4px,#0000ff 100.0px),#ff0000;background-blend-mode:screen;clip-path:polygon(0.0px 58.0px,99.6px 0.5px,99.6px 115.5px,0.0px 173.0px);"></div><div style="position:absolute;left:175px;top:54px;width:136px;height:79px;background:linear-gradient(150.00deg,#000 34.4px,#ff0000 102.4px),linear-gradient(-150.00deg,#000 34.4px,#0000ff 102.4px),#00ff00;background-blend-mode:screen;clip-path:polygon(68.0px 0.5px,136.0px 39.8px,68.0px 79.0px,0.0px 39.8px);"></div><div style="position:absolute;left:175px;top:93px;width:68px;height:119px;background:linear-gradient(30.00deg,#000 34.4px,#00ff00 102.4px),linear-gradient(90.00deg,#000 0.0px,#ff0000 68.0px),#0000ff;background-blend-mode:screen;clip-path:polygon(0.0px 0.8px,68.0px 40.0px,68.0px 118.5px,0.0px 79.2px);"></div><div style="position:absolute;left:243px;top:93px;width:68px;height:119px;background:linear-gradient(-30.00deg,#000 34.4px,#00ff00 102.4px),linear-gradient(-90.00deg,#000 0.0px,#0000ff 68.0px),#ff0000;background-blend-mode:screen;clip-path:polygon(0.0px 40.0px,68.0px 0.8px,68.0px 79.2px,0.0px 118.5px);"></div></div></div>
<div style="left:607px;top:579px;width:1000px;height:1px;background:#161616;"></div>
<div style="left:617px;top:585px;width:78px;height:19px;background:#141414;border-radius:4px;box-shadow:0 0 0 1px #2e2e2e"></div>
<div class="t" style="left:625px;top:589.69px;font-size:11px;line-height:11px;color:#d8d8d8;font-weight:400;">50%</div>
<svg style="left:676px;top:590px;" width="12" height="8" viewBox="0 0 12 8"><path d="M1 1l5 5 5-5" stroke="#d0d0d0" stroke-width="1.6" fill="none"/></svg>
<div style="left:705px;top:587px;width:1px;height:15px;background:#2e2e2e;"></div>
<div style="left:714px;top:585px;width:89px;height:19px;background:#141414;border-radius:4px;box-shadow:0 0 0 1px #2e2e2e"></div>
<div class="t" style="left:723px;top:589.69px;font-size:11px;line-height:11px;color:#d8d8d8;font-weight:400;">Full</div>
<svg style="left:784px;top:590px;" width="12" height="8" viewBox="0 0 12 8"><path d="M1 1l5 5 5-5" stroke="#d0d0d0" stroke-width="1.6" fill="none"/></svg>
<div style="left:813px;top:587px;width:1px;height:15px;background:#2e2e2e;"></div>
<svg style="left:825px;top:587px;" width="15" height="15" viewBox="0 0 15 15"><rect x="0.7" y="0.7" width="13" height="12" fill="none" stroke="#bdbdbd" stroke-width="1.3"/><path d="M8 2L4 8h3l-1 4 4-6H7z" fill="#bdbdbd"/></svg>
<svg style="left:849px;top:588px;" width="15" height="13" viewBox="0 0 15 13"><rect x="0.7" y="0.7" width="13" height="11" fill="none" stroke="#bdbdbd" stroke-width="1.3"/><rect x="3" y="3" width="3" height="3" fill="#888"/><rect x="9" y="3" width="3" height="3" fill="#888"/><rect x="6" y="6" width="3" height="3" fill="#888"/></svg>
<svg style="left:873px;top:587px;" width="16" height="15" viewBox="0 0 16 15"><path d="M2 3l12-2v12H2z" fill="none" stroke="#bdbdbd" stroke-width="1.3"/><rect x="0" y="1" width="3" height="3" fill="#bdbdbd"/><rect x="13" y="0" width="3" height="3" fill="#bdbdbd"/><rect x="0" y="12" width="3" height="3" fill="#bdbdbd"/><rect x="13" y="12" width="3" height="3" fill="#bdbdbd"/></svg>
<svg style="left:896px;top:587px;" width="15" height="14" viewBox="0 0 15 14"><rect x="0.7" y="0.7" width="13" height="12" fill="none" stroke="#bdbdbd" stroke-width="1.3"/><rect x="3.5" y="3.5" width="7" height="6" fill="#bdbdbd"/></svg>
<svg style="left:920px;top:586px;" width="16" height="17" viewBox="0 0 16 17"><rect x="0.7" y="2.7" width="13" height="10" fill="none" stroke="#bdbdbd" stroke-width="1.3"/><path d="M7 0v15M0 7.5h15" stroke="#bdbdbd" stroke-width="1.2"/><path d="M9 15l2 2 2-2z" fill="#bdbdbd"/></svg>
<div style="left:947px;top:587px;width:1px;height:15px;background:#2e2e2e;"></div>
<svg style="left:959px;top:587px;" width="16" height="16" viewBox="0 0 16 16"><circle cx="7" cy="4" r="3.2" fill="#e02020"/><circle cx="4" cy="9" r="3.2" fill="#20b040"/><circle cx="10" cy="9" r="3.2" fill="#3070ff"/><path d="M11 14l2 2 2-2z" fill="#bdbdbd"/></svg>
<svg style="left:983px;top:587px;" width="15" height="15" viewBox="0 0 15 15"><circle cx="7.5" cy="7.5" r="6.5" fill="#bdbdbd"/><circle cx="7.5" cy="7.5" r="2.8" fill="#202020"/><path d="M7.5 1L5 6M14 7.5l-5-2.5M7.5 14l2.5-5M1 7.5l5 2.5" stroke="#202020" stroke-width="1.2"/></svg>
<div class="t" style="left:1005px;top:589.27px;font-size:11.5px;line-height:11.5px;color:#3d8ff0;font-weight:400;">+0,0</div>
<div style="left:1046px;top:587px;width:1px;height:15px;background:#2e2e2e;"></div>
<svg style="left:1058px;top:587px;" width="16" height="14" viewBox="0 0 16 14"><path d="M1 4h3.5l1.5-2h4l1.5 2H15v9H1z" fill="#bdbdbd"/><circle cx="8" cy="8" r="3" fill="#202020"/><circle cx="8" cy="8" r="1.7" fill="#bdbdbd"/></svg>
<svg style="left:1082px;top:586px;" width="16" height="15" viewBox="0 0 16 15"><path d="M1 9c3-4 9-4 12 0-3 4-9 4-12 0z" fill="#666"/><circle cx="7" cy="9" r="2.2" fill="#202020"/><circle cx="12" cy="4" r="3" fill="none" stroke="#666" stroke-width="1.2"/></svg>
<div style="left:1108px;top:587px;width:1px;height:15px;background:#2e2e2e;"></div>
<div style="left:1118px;top:585px;width:69px;height:19px;background:#141414;border-radius:4px;box-shadow:0 0 0 1px #2e2e2e"></div>
<div class="t" style="left:1127px;top:589.69px;font-size:11px;line-height:11px;color:#d8d8d8;font-weight:400;">0:00:01:58</div>
<div style="left:1197px;top:587px;width:1px;height:15px;background:#2e2e2e;"></div>
<div style="left:1611px;top:85px;width:309px;height:484px;background:#202020;"></div>
<div class="t" style="left:1623px;top:91.77px;font-size:10.9px;line-height:10.9px;color:#e8e8e8;font-weight:400;">Effects &amp; Presets</div>
<div style="left:1892px;top:94px;width:8px;height:1px;background:#c8c8c8;"></div>
<div style="left:1892px;top:97px;width:8px;height:1px;background:#c8c8c8;"></div>
<div style="left:1892px;top:100px;width:8px;height:1px;background:#c8c8c8;"></div>
<div style="left:1617px;top:112px;width:288px;height:18px;background:#0f0f0f;border-radius:4px;box-shadow:0 0 0 1px #2c2c2c"></div>
<svg style="left:1623px;top:115px;" width="18" height="12" viewBox="0 0 18 12"><circle cx="5" cy="5" r="3.6" fill="none" stroke="#bdbdbd" stroke-width="1.2"/><path d="M7.6 7.6l3 3" stroke="#bdbdbd" stroke-width="1.2"/><path d="M11 6l2 2 2-2" stroke="#bdbdbd" stroke-width="1" fill="none"/></svg>
<div style="left:1612px;top:132px;width:298px;height:1px;background:#151515;"></div>
<div style="left:1612px;top:149px;width:298px;height:1px;background:#141414;"></div>
<svg style="left:1616px;top:137px;" width="7" height="10" viewBox="0 0 7 10"><path d="M1.2 1l4 4-4 4" stroke="#bdbdbd" stroke-width="1.5" fill="none"/></svg>
<div class="t" style="left:1627px;top:136.86px;font-size:10.8px;line-height:10.8px;color:#c4c4c4;font-weight:400;">* Animation Presets</div>
<div style="left:1612px;top:166px;width:298px;height:1px;background:#141414;"></div>
<svg style="left:1616px;top:154px;" width="7" height="10" viewBox="0 0 7 10"><path d="M1.2 1l4 4-4 4" stroke="#bdbdbd" stroke-width="1.5" fill="none"/></svg>
<div class="t" style="left:1627px;top:153.86px;font-size:10.8px;line-height:10.8px;color:#c4c4c4;font-weight:400;">3D Channel</div>
<div style="left:1612px;top:183px;width:298px;height:1px;background:#141414;"></div>
<svg style="left:1616px;top:171px;" width="7" height="10" viewBox="0 0 7 10"><path d="M1.2 1l4 4-4 4" stroke="#bdbdbd" stroke-width="1.5" fill="none"/></svg>
<div class="t" style="left:1627px;top:170.86px;font-size:10.8px;line-height:10.8px;color:#c4c4c4;font-weight:400;">Audio</div>
<div style="left:1612px;top:200px;width:298px;height:1px;background:#141414;"></div>
<svg style="left:1616px;top:188px;" width="7" height="10" viewBox="0 0 7 10"><path d="M1.2 1l4 4-4 4" stroke="#bdbdbd" stroke-width="1.5" fill="none"/></svg>
<div class="t" style="left:1627px;top:187.86px;font-size:10.8px;line-height:10.8px;color:#c4c4c4;font-weight:400;">Blur &amp; Sharpen</div>
<div style="left:1612px;top:217px;width:298px;height:1px;background:#141414;"></div>
<svg style="left:1616px;top:205px;" width="7" height="10" viewBox="0 0 7 10"><path d="M1.2 1l4 4-4 4" stroke="#bdbdbd" stroke-width="1.5" fill="none"/></svg>
<div class="t" style="left:1627px;top:204.86px;font-size:10.8px;line-height:10.8px;color:#c4c4c4;font-weight:400;">Boris FX Mocha</div>
<div style="left:1612px;top:234px;width:298px;height:1px;background:#141414;"></div>
<svg style="left:1616px;top:222px;" width="7" height="10" viewBox="0 0 7 10"><path d="M1.2 1l4 4-4 4" stroke="#bdbdbd" stroke-width="1.5" fill="none"/></svg>
<div class="t" style="left:1627px;top:221.86px;font-size:10.8px;line-height:10.8px;color:#c4c4c4;font-weight:400;">Channel</div>
<div style="left:1612px;top:251px;width:298px;height:1px;background:#141414;"></div>
<svg style="left:1616px;top:239px;" width="7" height="10" viewBox="0 0 7 10"><path d="M1.2 1l4 4-4 4" stroke="#bdbdbd" stroke-width="1.5" fill="none"/></svg>
<div class="t" style="left:1627px;top:238.86px;font-size:10.8px;line-height:10.8px;color:#c4c4c4;font-weight:400;">Cinema 4D</div>
<div style="left:1612px;top:268px;width:298px;height:1px;background:#141414;"></div>
<svg style="left:1616px;top:256px;" width="7" height="10" viewBox="0 0 7 10"><path d="M1.2 1l4 4-4 4" stroke="#bdbdbd" stroke-width="1.5" fill="none"/></svg>
<div class="t" style="left:1627px;top:255.86px;font-size:10.8px;line-height:10.8px;color:#c4c4c4;font-weight:400;">Color Correction</div>
<div style="left:1612px;top:285px;width:298px;height:1px;background:#141414;"></div>
<svg style="left:1616px;top:273px;" width="7" height="10" viewBox="0 0 7 10"><path d="M1.2 1l4 4-4 4" stroke="#bdbdbd" stroke-width="1.5" fill="none"/></svg>
<div class="t" style="left:1627px;top:272.86px;font-size:10.8px;line-height:10.8px;color:#c4c4c4;font-weight:400;">Distort</div>
<div style="left:1612px;top:302px;width:298px;height:1px;background:#141414;"></div>
<svg style="left:1616px;top:290px;" width="7" height="10" viewBox="0 0 7 10"><path d="M1.2 1l4 4-4 4" stroke="#bdbdbd" stroke-width="1.5" fill="none"/></svg>
<div class="t" style="left:1627px;top:289.86px;font-size:10.8px;line-height:10.8px;color:#c4c4c4;font-weight:400;">Expression Controls</div>
<div style="left:1612px;top:319px;width:298px;height:1px;background:#141414;"></div>
<svg style="left:1616px;top:307px;" width="7" height="10" viewBox="0 0 7 10"><path d="M1.2 1l4 4-4 4" stroke="#bdbdbd" stroke-width="1.5" fill="none"/></svg>
<div class="t" style="left:1627px;top:306.86px;font-size:10.8px;line-height:10.8px;color:#c4c4c4;font-weight:400;">Generate</div>
<div style="left:1612px;top:336px;width:298px;height:1px;background:#141414;"></div>
<svg style="left:1616px;top:324px;" width="7" height="10" viewBox="0 0 7 10"><path d="M1.2 1l4 4-4 4" stroke="#bdbdbd" stroke-width="1.5" fill="none"/></svg>
<div class="t" style="left:1627px;top:323.86px;font-size:10.8px;line-height:10.8px;color:#c4c4c4;font-weight:400;">Immersive Video</div>
<div style="left:1612px;top:353px;width:298px;height:1px;background:#141414;"></div>
<svg style="left:1616px;top:341px;" width="7" height="10" viewBox="0 0 7 10"><path d="M1.2 1l4 4-4 4" stroke="#bdbdbd" stroke-width="1.5" fill="none"/></svg>
<div class="t" style="left:1627px;top:340.86px;font-size:10.8px;line-height:10.8px;color:#c4c4c4;font-weight:400;">Keying</div>
<div style="left:1612px;top:370px;width:298px;height:1px;background:#141414;"></div>
<svg style="left:1616px;top:358px;" width="7" height="10" viewBox="0 0 7 10"><path d="M1.2 1l4 4-4 4" stroke="#bdbdbd" stroke-width="1.5" fill="none"/></svg>
<div class="t" style="left:1627px;top:357.86px;font-size:10.8px;line-height:10.8px;color:#c4c4c4;font-weight:400;">Matte</div>
<div style="left:1612px;top:387px;width:298px;height:1px;background:#141414;"></div>
<svg style="left:1616px;top:375px;" width="7" height="10" viewBox="0 0 7 10"><path d="M1.2 1l4 4-4 4" stroke="#bdbdbd" stroke-width="1.5" fill="none"/></svg>
<div class="t" style="left:1627px;top:374.86px;font-size:10.8px;line-height:10.8px;color:#c4c4c4;font-weight:400;">Noise &amp; Grain</div>
<div style="left:1612px;top:404px;width:298px;height:1px;background:#141414;"></div>
<svg style="left:1616px;top:392px;" width="7" height="10" viewBox="0 0 7 10"><path d="M1.2 1l4 4-4 4" stroke="#bdbdbd" stroke-width="1.5" fill="none"/></svg>
<div class="t" style="left:1627px;top:391.86px;font-size:10.8px;line-height:10.8px;color:#c4c4c4;font-weight:400;">Obsolete</div>
<div style="left:1612px;top:421px;width:298px;height:1px;background:#141414;"></div>
<svg style="left:1616px;top:409px;" width="7" height="10" viewBox="0 0 7 10"><path d="M1.2 1l4 4-4 4" stroke="#bdbdbd" stroke-width="1.5" fill="none"/></svg>
<div class="t" style="left:1627px;top:408.86px;font-size:10.8px;line-height:10.8px;color:#c4c4c4;font-weight:400;">Perspective</div>
<div style="left:1612px;top:438px;width:298px;height:1px;background:#141414;"></div>
<svg style="left:1616px;top:426px;" width="7" height="10" viewBox="0 0 7 10"><path d="M1.2 1l4 4-4 4" stroke="#bdbdbd" stroke-width="1.5" fill="none"/></svg>
<div class="t" style="left:1627px;top:425.86px;font-size:10.8px;line-height:10.8px;color:#c4c4c4;font-weight:400;">Plugin Everything</div>
<div style="left:1612px;top:455px;width:298px;height:1px;background:#141414;"></div>
<svg style="left:1616px;top:443px;" width="7" height="10" viewBox="0 0 7 10"><path d="M1.2 1l4 4-4 4" stroke="#bdbdbd" stroke-width="1.5" fill="none"/></svg>
<div class="t" style="left:1627px;top:442.86px;font-size:10.8px;line-height:10.8px;color:#c4c4c4;font-weight:400;">Simulation</div>
<div style="left:1612px;top:472px;width:298px;height:1px;background:#141414;"></div>
<svg style="left:1616px;top:460px;" width="7" height="10" viewBox="0 0 7 10"><path d="M1.2 1l4 4-4 4" stroke="#bdbdbd" stroke-width="1.5" fill="none"/></svg>
<div class="t" style="left:1627px;top:459.86px;font-size:10.8px;line-height:10.8px;color:#c4c4c4;font-weight:400;">Stylize</div>
<div style="left:1612px;top:489px;width:298px;height:1px;background:#141414;"></div>
<svg style="left:1616px;top:477px;" width="7" height="10" viewBox="0 0 7 10"><path d="M1.2 1l4 4-4 4" stroke="#bdbdbd" stroke-width="1.5" fill="none"/></svg>
<div class="t" style="left:1627px;top:476.86px;font-size:10.8px;line-height:10.8px;color:#c4c4c4;font-weight:400;">Text</div>
<div style="left:1612px;top:506px;width:298px;height:1px;background:#141414;"></div>
<svg style="left:1616px;top:494px;" width="7" height="10" viewBox="0 0 7 10"><path d="M1.2 1l4 4-4 4" stroke="#bdbdbd" stroke-width="1.5" fill="none"/></svg>
<div class="t" style="left:1627px;top:493.86px;font-size:10.8px;line-height:10.8px;color:#c4c4c4;font-weight:400;">Time</div>
<div style="left:1612px;top:523px;width:298px;height:1px;background:#141414;"></div>
<svg style="left:1616px;top:511px;" width="7" height="10" viewBox="0 0 7 10"><path d="M1.2 1l4 4-4 4" stroke="#bdbdbd" stroke-width="1.5" fill="none"/></svg>
<div class="t" style="left:1627px;top:510.86px;font-size:10.8px;line-height:10.8px;color:#c4c4c4;font-weight:400;">Transition</div>
<div style="left:1612px;top:540px;width:298px;height:1px;background:#141414;"></div>
<svg style="left:1616px;top:528px;" width="7" height="10" viewBox="0 0 7 10"><path d="M1.2 1l4 4-4 4" stroke="#bdbdbd" stroke-width="1.5" fill="none"/></svg>
<div class="t" style="left:1627px;top:527.86px;font-size:10.8px;line-height:10.8px;color:#c4c4c4;font-weight:400;">Utility</div>
<div style="left:1612px;top:541px;width:298px;height:2px;background:#0c0c0c;"></div>
<div style="left:1911px;top:85px;width:8px;height:422px;background:#505050;"></div>
<div style="left:1919px;top:85px;width:1px;height:520px;background:#000;"></div>
<svg style="left:1889px;top:548px;" width="13" height="13" viewBox="0 0 13 13"><path d="M0 0h13v13H5V8H0z" fill="#c8c8c8"/><path d="M0 9l4 4H0z" fill="#c8c8c8"/></svg>
<div style="left:1611px;top:569px;width:309px;height:1px;background:#000;"></div>
<div style="left:1611px;top:570px;width:309px;height:24px;background:#202020;"></div>
<div class="t" style="left:1623px;top:577.69px;font-size:11px;line-height:11px;color:#c8c8c8;font-weight:400;">Character</div>
<div style="left:1611px;top:594px;width:309px;height:2px;background:#000;"></div>
<div style="left:1611px;top:596px;width:309px;height:9px;background:#202020;"></div>
<div class="t" style="left:1623px;top:601.69px;font-size:11px;line-height:11px;color:#c8c8c8;font-weight:400;">Tracker</div>
<div style="left:1611px;top:605px;width:309px;height:5px;background:#000;"></div>
<div style="left:0px;top:605px;width:1920px;height:5px;background:#000;"></div>
<div style="left:1px;top:610px;width:1919px;height:422px;background:#202020;"></div>
<div style="left:27px;top:616px;width:10px;height:10px;background:#c5af85;"></div>
<div class="t" style="left:48px;top:616.69px;font-size:11px;line-height:11px;color:#c4c4c4;font-weight:400;">free luts Linked Comp 01</div>
<div class="t" style="left:225px;top:616.69px;font-size:11px;line-height:11px;color:#c4c4c4;font-weight:400;">Render Queue</div>
<svg style="left:336px;top:620px;" width="7" height="7" viewBox="0 0 7 7"><path d="M1 1l5 5M6 1l-5 5" stroke="#8a8a8a" stroke-width="1.3"/></svg>
<div style="left:351px;top:616px;width:10px;height:10px;background:#c5af85;"></div>
<div class="t" style="left:372px;top:616.43px;font-size:11.3px;line-height:11.3px;color:#ececec;font-weight:400;">10 Luts</div>
<div style="left:418px;top:619px;width:8px;height:1px;background:#c8c8c8;"></div>
<div style="left:418px;top:622px;width:8px;height:1px;background:#c8c8c8;"></div>
<div style="left:418px;top:625px;width:8px;height:1px;background:#c8c8c8;"></div>
<div style="left:336px;top:631px;width:90px;height:2px;background:#c8c8c8;"></div>
<div class="t" style="left:13.5px;top:638.56px;font-size:14.7px;line-height:14.7px;color:#3d9bff;font-weight:700;">0:00:01:58</div>
<div class="t" style="left:12px;top:655.62px;font-size:9.9px;line-height:9.9px;color:#2f80e8;font-weight:400;">00118 (60.00 fps)</div>
<div style="left:100px;top:642px;width:299px;height:18px;background:#0e0e0e;border-radius:4px"></div>
<svg style="left:107px;top:645px;" width="18" height="13" viewBox="0 0 18 13"><circle cx="5" cy="5" r="3.6" fill="none" stroke="#c8c8c8" stroke-width="1.2"/><path d="M7.6 7.6l3 3" stroke="#c8c8c8" stroke-width="1.2"/><path d="M11 6l2 2 2-2" stroke="#c8c8c8" stroke-width="1" fill="none"/></svg>
<svg style="left:412px;top:644px;" width="17" height="15" viewBox="0 0 17 15"><rect x="0" y="2" width="5" height="2" fill="#c8c8c8"/><path d="M5 3h6M8 3v9h3M8 7h3" stroke="#c8c8c8" stroke-width="1.2" fill="none"/><rect x="10" y="2" width="4" height="2.5" fill="#c8c8c8"/><rect x="10" y="6" width="4" height="2.5" fill="#c8c8c8"/><rect x="10" y="11" width="4" height="2.5" fill="#c8c8c8"/><path d="M13 14l1.5 1.5 1.5-1.5z" fill="#c8c8c8"/></svg>
<svg style="left:436px;top:645px;" width="14" height="12" viewBox="0 0 14 12"><path d="M2.5 6.5a4.5 4.5 0 0 1 9 0z" fill="#d8d8d8"/><rect x="0" y="7.5" width="14" height="1.4" fill="#d8d8d8"/><rect x="6.2" y="6" width="1.6" height="5" fill="#d8d8d8"/><circle cx="5.2" cy="4.2" r="1" fill="#222"/><circle cx="8.8" cy="4.2" r="1" fill="#222"/></svg>
<div style="left:436px;top:656px;width:16px;height:3px;background:#444;"></div>
<svg style="left:461px;top:644px;" width="15" height="15" viewBox="0 0 15 15"><rect x="3" y="0" width="11" height="12" fill="none" stroke="#c8c8c8" stroke-width="1.2"/><rect x="5.5" y="2.5" width="6" height="7" fill="#c8c8c8"/><path d="M1 3v11h11" stroke="#c8c8c8" stroke-width="1.2" fill="none"/></svg>
<svg style="left:485px;top:644px;" width="15" height="15" viewBox="0 0 15 15"><circle cx="5.2" cy="9.8" r="4.6" fill="#222" stroke="#c8c8c8" stroke-width="1.1"/><circle cx="6.9" cy="8.1" r="4.6" fill="#222" stroke="#c8c8c8" stroke-width="1.1"/><circle cx="9.6" cy="5.4" r="4.8" fill="#454545" stroke="#c8c8c8" stroke-width="1.2"/></svg>
<svg style="left:508px;top:643px;" width="17" height="17" viewBox="0 0 17 17"><rect x="1" y="2" width="15" height="14" fill="none" stroke="#c8c8c8" stroke-width="1.2"/><path d="M3 6c3 0 4 7 7 7h4" stroke="#c8c8c8" stroke-width="1.2" fill="none"/><path d="M4 0v2M8 0v2M12 0v2" stroke="#c8c8c8"/></svg>
<div style="left:1px;top:669px;width:536px;height:1px;background:#141414;"></div>
<div style="left:1px;top:688px;width:536px;height:1px;background:#141414;"></div>
<svg style="left:7px;top:676px;" width="12" height="8" viewBox="0 0 12 8"><path d="M0.5 4C3 0 9 0 11.5 4 9 8 3 8 0.5 4z" fill="#c8c8c8"/><circle cx="6" cy="4" r="2" fill="#202020"/></svg>
<svg style="left:22px;top:674px;" width="13" height="12" viewBox="0 0 13 12"><path d="M0 4h3l4-4v12l-4-4H0z" fill="#c8c8c8"/><path d="M9 3a4 4 0 0 1 0 6M11 1a6 6 0 0 1 0 10" stroke="#c8c8c8" stroke-width="1.1" fill="none"/></svg>
<svg style="left:39px;top:676px;" width="8" height="8" viewBox="0 0 8 8"><circle cx="4" cy="4" r="3.6" fill="#c8c8c8"/></svg>
<svg style="left:53px;top:673px;" width="11" height="12" viewBox="0 0 11 12"><rect x="0" y="5" width="11" height="7" fill="#c8c8c8"/><path d="M2.5 5V3.5a3 3 0 0 1 6 0V5" stroke="#c8c8c8" stroke-width="1.5" fill="none"/><rect x="5" y="7" width="1.5" height="3" fill="#202020"/></svg>
<div style="left:69px;top:674px;width:2px;height:11px;background:#0c0c0c;"></div>
<div style="left:101px;top:674px;width:2px;height:11px;background:#0c0c0c;"></div>
<div style="left:134px;top:674px;width:2px;height:11px;background:#0c0c0c;"></div>
<div style="left:404px;top:674px;width:2px;height:11px;background:#0c0c0c;"></div>
<div style="left:520px;top:674px;width:2px;height:11px;background:#0c0c0c;"></div>
<svg style="left:83px;top:673px;" width="13" height="13" viewBox="0 0 13 13"><path d="M1 5l5-5h6v6l-5 5z" fill="#c0c0c0" transform="rotate(90 6.5 6.5)"/><circle cx="4" cy="3.5" r="1" fill="#202020"/></svg>
<div class="t" style="left:107px;top:675.96px;font-size:9.5px;line-height:9.5px;color:#c0c0c0;font-weight:400;">#</div>
<div class="t" style="left:140px;top:676.13px;font-size:9.3px;line-height:9.3px;color:#c8c8c8;font-weight:400;">Source Name</div>
<svg style="left:269px;top:674px;" width="14" height="12" viewBox="0 0 14 12"><path d="M2.5 6.5a4.5 4.5 0 0 1 9 0z" fill="#d8d8d8"/><rect x="0" y="7.5" width="14" height="1.4" fill="#d8d8d8"/><rect x="6.2" y="6" width="1.6" height="5" fill="#d8d8d8"/><circle cx="5.2" cy="4.2" r="1" fill="#222"/><circle cx="8.8" cy="4.2" r="1" fill="#222"/></svg>
<svg style="left:286px;top:675px;" width="11" height="11" viewBox="0 0 11 11"><circle cx="5.5" cy="5.5" r="2.5" fill="#c8c8c8"/><path d="M5.5 0v2M5.5 9v2M0 5.5h2M9 5.5h2M1.6 1.6l1.4 1.4M8 8l1.4 1.4M1.6 9.4L3 8M8 3l1.4-1.4" stroke="#c8c8c8" stroke-width="1"/></svg>
<svg style="left:300px;top:674px;" width="12" height="12" viewBox="0 0 12 12"><path d="M1 1l10 10" stroke="#c8c8c8" stroke-width="1.5" stroke-dasharray="1.8 1"/></svg>
<div class="t" style="left:315px;top:673.92px;font-size:12.5px;line-height:12.5px;color:#c8c8c8;font-weight:400;font-style:italic;font-family:"Liberation Serif",serif">fx</div>
<svg style="left:329px;top:674px;" width="13" height="12" viewBox="0 0 13 12"><rect x="0" y="0" width="13" height="12" fill="#c8c8c8"/><rect x="2" y="1" width="9" height="10" fill="#444"/><rect x="3" y="5" width="7" height="2" fill="#c8c8c8"/></svg>
<svg style="left:344px;top:673px;" width="15" height="15" viewBox="0 0 15 15"><circle cx="5.2" cy="9.8" r="4.6" fill="#222" stroke="#c8c8c8" stroke-width="1.1"/><circle cx="6.9" cy="8.1" r="4.6" fill="#222" stroke="#c8c8c8" stroke-width="1.1"/><circle cx="9.6" cy="5.4" r="4.8" fill="#454545" stroke="#c8c8c8" stroke-width="1.2"/></svg>
<svg style="left:360px;top:674px;" width="12" height="12" viewBox="0 0 12 12"><circle cx="6" cy="6" r="5.5" fill="#c8c8c8"/><path d="M10 2L2 10A5.5 5.5 0 0 0 10 2z" fill="#222"/></svg>
<svg style="left:376px;top:674px;" width="11" height="12" viewBox="0 0 11 12"><path d="M5.5 0.7l4.8 2.8v5L5.5 11.3 0.7 8.5v-5z" fill="none" stroke="#c8c8c8" stroke-width="1.2"/><path d="M0.7 3.5l4.8 2.8 4.8-2.8M5.5 6.3v5" stroke="#c8c8c8" stroke-width="1.1" fill="none"/></svg>
<div class="t" style="left:410px;top:676.13px;font-size:9.3px;line-height:9.3px;color:#c8c8c8;font-weight:400;">Parent &amp; Link</div>
<div style="left:1px;top:689px;width:536px;height:16px;background:#2e2e2e;"></div>
<div style="left:1px;top:705px;width:536px;height:1px;background:#121212;"></div>
<div style="left:6px;top:690px;width:13px;height:13px;background:#0e0e0e;border-radius:2px"></div>
<svg style="left:7px;top:693px;" width="11" height="7" viewBox="0 0 11 7"><path d="M0.5 3.5C3 0 8 0 10.5 3.5 8 7 3 7 0.5 3.5z" fill="#e8e8e8"/><circle cx="5.5" cy="3.5" r="1.8" fill="#0e0e0e"/></svg>
<div style="left:36px;top:690px;width:12px;height:13px;background:#141414;"></div>
<div style="left:51px;top:690px;width:12px;height:13px;background:#141414;"></div>
<svg style="left:75px;top:693px;" width="7" height="9" viewBox="0 0 7 9"><path d="M1 1l4.5 3.5L1 8" stroke="#c8c8c8" stroke-width="1.5" fill="none"/></svg>
<div style="left:87px;top:691px;width:12px;height:12px;background:#d84040;"></div>
<div class="t" style="left:108px;top:692.19px;font-size:11px;line-height:11px;color:#c8c8c8;font-weight:400;">1</div>
<div style="left:137px;top:690px;width:14px;height:13px;background:#fff;box-shadow:0 0 0 1px #000"></div>
<div class="t" style="left:156px;top:692.19px;font-size:11px;line-height:11px;color:#c8c8c8;font-weight:400;">Adjustment Layer 1</div>
<svg style="left:269px;top:691px;" width="14" height="12" viewBox="0 0 14 12"><path d="M2.5 6.5a4.5 4.5 0 0 1 9 0z" fill="#d8d8d8"/><rect x="0" y="7.5" width="14" height="1.4" fill="#d8d8d8"/><rect x="6.2" y="6" width="1.6" height="5" fill="#d8d8d8"/><circle cx="5.2" cy="4.2" r="1" fill="#222"/><circle cx="8.8" cy="4.2" r="1" fill="#222"/></svg>
<div style="left:285px;top:690px;width:12px;height:13px;background:#1a1a1a;"></div>
<div style="left:300px;top:690px;width:12px;height:13px;background:#1a1a1a;"></div>
<svg style="left:300px;top:690px;" width="12" height="13" viewBox="0 0 12 13"><path d="M1.5 12L10.5 1" stroke="#d8d8d8" stroke-width="1.3"/></svg>
<div class="t" style="left:315px;top:690.50px;font-size:13px;line-height:13px;color:#c8c8c8;font-weight:400;font-style:italic;font-family:"Liberation Serif",serif">fx</div>
<div style="left:344px;top:690px;width:12px;height:13px;background:#1a1a1a;"></div>
<svg style="left:360px;top:691px;" width="12" height="12" viewBox="0 0 12 12"><circle cx="6" cy="6" r="5.5" fill="#c8c8c8"/><path d="M10 2L2 10A5.5 5.5 0 0 0 10 2z" fill="#222"/></svg>
<div style="left:375px;top:690px;width:12px;height:13px;background:#1a1a1a;"></div>
<svg style="left:410px;top:691px;" width="12" height="12" viewBox="0 0 12 12"><path d="M6.2 6.3a0.9 0.9 0 1 1 1-1.3 2.6 2.6 0 0 1-1.5 3.9A3.6 3.6 0 0 1 2.3 5.2 4.2 4.2 0 0 1 6.4 1.3a4.8 4.8 0 0 1 4.6 4.6A5 5 0 0 1 6 11" stroke="#6e6e6e" stroke-width="1.5" fill="none"/></svg>
<div style="left:428px;top:690px;width:89px;height:15px;background:#0e0e0e;border-radius:4px"></div>
<div class="t" style="left:436px;top:691.93px;font-size:11.3px;line-height:11.3px;color:#d8d8d8;font-weight:400;">None</div>
<svg style="left:499px;top:694px;" width="10" height="7" viewBox="0 0 10 7"><path d="M1 1l4 4 4-4" stroke="#d8d8d8" stroke-width="1.6" fill="none"/></svg>
<div style="left:1px;top:706px;width:536px;height:16px;background:#2e2e2e;"></div>
<div style="left:1px;top:722px;width:536px;height:1px;background:#121212;"></div>
<div style="left:6px;top:707px;width:13px;height:13px;background:#0e0e0e;border-radius:2px"></div>
<svg style="left:7px;top:710px;" width="11" height="7" viewBox="0 0 11 7"><path d="M0.5 3.5C3 0 8 0 10.5 3.5 8 7 3 7 0.5 3.5z" fill="#e8e8e8"/><circle cx="5.5" cy="3.5" r="1.8" fill="#0e0e0e"/></svg>
<div style="left:36px;top:707px;width:12px;height:13px;background:#141414;"></div>
<div style="left:51px;top:707px;width:12px;height:13px;background:#141414;"></div>
<svg style="left:75px;top:711px;" width="10" height="7" viewBox="0 0 10 7"><path d="M1 1l4 4 4-4" stroke="#c8c8c8" stroke-width="1.5" fill="none"/></svg>
<div style="left:87px;top:708px;width:12px;height:12px;background:#b0acd8;"></div>
<div class="t" style="left:108px;top:709.19px;font-size:11px;line-height:11px;color:#c8c8c8;font-weight:400;">2</div>
<svg style="left:138px;top:709px;" width="13" height="10" viewBox="0 0 13 10"><rect x="0" y="0" width="13" height="10" rx="1" fill="#f4f4f4"/><rect x="3.5" y="1.5" width="6" height="7" fill="#1f6fd8"/><path d="M4 8l2-2.5 1.5 1.5 2-1v2z" fill="#fff"/></svg>
<div class="t" style="left:156px;top:709.19px;font-size:11px;line-height:11px;color:#c8c8c8;font-weight:400;">lut.png</div>
<svg style="left:269px;top:708px;" width="14" height="12" viewBox="0 0 14 12"><path d="M2.5 6.5a4.5 4.5 0 0 1 9 0z" fill="#d8d8d8"/><rect x="0" y="7.5" width="14" height="1.4" fill="#d8d8d8"/><rect x="6.2" y="6" width="1.6" height="5" fill="#d8d8d8"/><circle cx="5.2" cy="4.2" r="1" fill="#222"/><circle cx="8.8" cy="4.2" r="1" fill="#222"/></svg>
<div style="left:300px;top:707px;width:12px;height:13px;background:#1a1a1a;"></div>
<svg style="left:300px;top:707px;" width="12" height="13" viewBox="0 0 12 13"><path d="M1.5 12L10.5 1" stroke="#d8d8d8" stroke-width="1.3"/></svg>
<svg style="left:344px;top:707px;" width="15" height="15" viewBox="0 0 15 15"><circle cx="5.2" cy="9.8" r="4.6" fill="#222" stroke="#c8c8c8" stroke-width="1.1"/><circle cx="6.9" cy="8.1" r="4.6" fill="#222" stroke="#c8c8c8" stroke-width="1.1"/><circle cx="9.6" cy="5.4" r="4.8" fill="#454545" stroke="#c8c8c8" stroke-width="1.2"/></svg>
<div style="left:360px;top:707px;width:12px;height:13px;background:#1a1a1a;"></div>
<div style="left:375px;top:707px;width:12px;height:13px;background:#1a1a1a;"></div>
<svg style="left:410px;top:708px;" width="12" height="12" viewBox="0 0 12 12"><path d="M6.2 6.3a0.9 0.9 0 1 1 1-1.3 2.6 2.6 0 0 1-1.5 3.9A3.6 3.6 0 0 1 2.3 5.2 4.2 4.2 0 0 1 6.4 1.3a4.8 4.8 0 0 1 4.6 4.6A5 5 0 0 1 6 11" stroke="#6e6e6e" stroke-width="1.5" fill="none"/></svg>
<div style="left:428px;top:707px;width:89px;height:15px;background:#0e0e0e;border-radius:4px"></div>
<div class="t" style="left:436px;top:708.93px;font-size:11.3px;line-height:11.3px;color:#d8d8d8;font-weight:400;">None</div>
<svg style="left:499px;top:711px;" width="10" height="7" viewBox="0 0 10 7"><path d="M1 1l4 4 4-4" stroke="#d8d8d8" stroke-width="1.6" fill="none"/></svg>
<div style="left:1px;top:723px;width:536px;height:16px;background:#1f1f1f;"></div>
<div style="left:1px;top:739px;width:536px;height:1px;background:#121212;"></div>
<svg style="left:10px;top:727px;" width="7" height="9" viewBox="0 0 7 9"><path d="M6.5 0.5v8L0.5 4.5z" fill="#a8a8a8"/></svg>
<svg style="left:24px;top:727px;" width="9" height="9" viewBox="0 0 9 9"><path d="M4.5 0.7l3.8 3.8-3.8 3.8L0.7 4.5z" fill="none" stroke="#a8a8a8" stroke-width="1.2"/></svg>
<svg style="left:39px;top:727px;" width="7" height="9" viewBox="0 0 7 9"><path d="M0.5 0.5v8l6-4z" fill="#a8a8a8"/></svg>
<div style="left:122px;top:724px;width:14px;height:14px;background:#141414;border-radius:3px"></div>
<svg style="left:122px;top:724px;" width="14" height="14" viewBox="0 0 14 14"><circle cx="7" cy="8" r="4.6" fill="none" stroke="#2f7de0" stroke-width="1.5"/><path d="M7 8l2.5-2.5" stroke="#2f7de0" stroke-width="1.4"/><path d="M5.5 1.5h3M7 1.5v2" stroke="#2f7de0" stroke-width="1.3"/></svg>
<svg style="left:141px;top:725px;" width="12" height="12" viewBox="0 0 12 12"><path d="M1 0v11h11" stroke="#777" stroke-width="1.2" fill="none"/><path d="M3 3l2 5 2-3 2 2 2-5" stroke="#777" stroke-width="1" fill="none"/></svg>
<div class="t" style="left:160px;top:726.43px;font-size:11.3px;line-height:11.3px;color:#c8c8c8;font-weight:400;">Scale</div>
<svg style="left:268px;top:727px;" width="15" height="8" viewBox="0 0 15 8"><rect x="0.7" y="0.7" width="8" height="6" rx="3" fill="none" stroke="#d0d0d0" stroke-width="1.4"/><rect x="6" y="0.7" width="8" height="6" rx="3" fill="none" stroke="#d0d0d0" stroke-width="1.4"/></svg>
<div class="t" style="left:287px;top:725.93px;font-size:11.3px;line-height:11.3px;color:#3d8ff0;font-weight:400;">87,3,87,3</div>
<div class="t" style="left:335px;top:725.93px;font-size:11.3px;line-height:11.3px;color:#c8c8c8;font-weight:400;">%</div>
<svg style="left:424px;top:725px;" width="12" height="12" viewBox="0 0 12 12"><path d="M6.2 6.3a0.9 0.9 0 1 1 1-1.3 2.6 2.6 0 0 1-1.5 3.9A3.6 3.6 0 0 1 2.3 5.2 4.2 4.2 0 0 1 6.4 1.3a4.8 4.8 0 0 1 4.6 4.6A5 5 0 0 1 6 11" stroke="#6e6e6e" stroke-width="1.5" fill="none"/></svg>
<div style="left:1px;top:740px;width:536px;height:16px;background:#2e2e2e;"></div>
<div style="left:1px;top:756px;width:536px;height:1px;background:#121212;"></div>
<div style="left:6px;top:741px;width:13px;height:13px;background:#0e0e0e;border-radius:2px"></div>
<svg style="left:7px;top:744px;" width="11" height="7" viewBox="0 0 11 7"><path d="M0.5 3.5C3 0 8 0 10.5 3.5 8 7 3 7 0.5 3.5z" fill="#e8e8e8"/><circle cx="5.5" cy="3.5" r="1.8" fill="#0e0e0e"/></svg>
<div style="left:36px;top:741px;width:12px;height:13px;background:#141414;"></div>
<div style="left:51px;top:741px;width:12px;height:13px;background:#141414;"></div>
<svg style="left:75px;top:745px;" width="10" height="7" viewBox="0 0 10 7"><path d="M1 1l4 4 4-4" stroke="#c8c8c8" stroke-width="1.5" fill="none"/></svg>
<div style="left:87px;top:742px;width:12px;height:12px;background:#b0acd8;"></div>
<div class="t" style="left:108px;top:743.19px;font-size:11px;line-height:11px;color:#c8c8c8;font-weight:400;">3</div>
<svg style="left:138px;top:743px;" width="13" height="10" viewBox="0 0 13 10"><rect x="0" y="0" width="13" height="10" rx="1" fill="#f4f4f4"/><rect x="3.5" y="1.5" width="6" height="7" fill="#1f6fd8"/><path d="M4 8l2-2.5 1.5 1.5 2-1v2z" fill="#fff"/></svg>
<div class="t" style="left:156px;top:743.19px;font-size:11px;line-height:11px;color:#c8c8c8;font-weight:400;">lut.png</div>
<svg style="left:269px;top:742px;" width="14" height="12" viewBox="0 0 14 12"><path d="M2.5 6.5a4.5 4.5 0 0 1 9 0z" fill="#d8d8d8"/><rect x="0" y="7.5" width="14" height="1.4" fill="#d8d8d8"/><rect x="6.2" y="6" width="1.6" height="5" fill="#d8d8d8"/><circle cx="5.2" cy="4.2" r="1" fill="#222"/><circle cx="8.8" cy="4.2" r="1" fill="#222"/></svg>
<div style="left:300px;top:741px;width:12px;height:13px;background:#1a1a1a;"></div>
<svg style="left:300px;top:741px;" width="12" height="13" viewBox="0 0 12 13"><path d="M1.5 12L10.5 1" stroke="#d8d8d8" stroke-width="1.3"/></svg>
<svg style="left:344px;top:741px;" width="15" height="15" viewBox="0 0 15 15"><circle cx="5.2" cy="9.8" r="4.6" fill="#222" stroke="#c8c8c8" stroke-width="1.1"/><circle cx="6.9" cy="8.1" r="4.6" fill="#222" stroke="#c8c8c8" stroke-width="1.1"/><circle cx="9.6" cy="5.4" r="4.8" fill="#454545" stroke="#c8c8c8" stroke-width="1.2"/></svg>
<div style="left:360px;top:741px;width:12px;height:13px;background:#1a1a1a;"></div>
<div style="left:375px;top:741px;width:12px;height:13px;background:#1a1a1a;"></div>
<svg style="left:410px;top:742px;" width="12" height="12" viewBox="0 0 12 12"><path d="M6.2 6.3a0.9 0.9 0 1 1 1-1.3 2.6 2.6 0 0 1-1.5 3.9A3.6 3.6 0 0 1 2.3 5.2 4.2 4.2 0 0 1 6.4 1.3a4.8 4.8 0 0 1 4.6 4.6A5 5 0 0 1 6 11" stroke="#6e6e6e" stroke-width="1.5" fill="none"/></svg>
<div style="left:428px;top:741px;width:89px;height:15px;background:#0e0e0e;border-radius:4px"></div>
<div class="t" style="left:436px;top:742.93px;font-size:11.3px;line-height:11.3px;color:#d8d8d8;font-weight:400;">None</div>
<svg style="left:499px;top:745px;" width="10" height="7" viewBox="0 0 10 7"><path d="M1 1l4 4 4-4" stroke="#d8d8d8" stroke-width="1.6" fill="none"/></svg>
<div style="left:1px;top:757px;width:536px;height:16px;background:#1f1f1f;"></div>
<div style="left:1px;top:773px;width:536px;height:1px;background:#121212;"></div>
<svg style="left:10px;top:761px;" width="7" height="9" viewBox="0 0 7 9"><path d="M6.5 0.5v8L0.5 4.5z" fill="#a8a8a8"/></svg>
<svg style="left:24px;top:761px;" width="9" height="9" viewBox="0 0 9 9"><path d="M4.5 0.7l3.8 3.8-3.8 3.8L0.7 4.5z" fill="none" stroke="#a8a8a8" stroke-width="1.2"/></svg>
<svg style="left:39px;top:761px;" width="7" height="9" viewBox="0 0 7 9"><path d="M0.5 0.5v8l6-4z" fill="#a8a8a8"/></svg>
<div style="left:122px;top:758px;width:14px;height:14px;background:#141414;border-radius:3px"></div>
<svg style="left:122px;top:758px;" width="14" height="14" viewBox="0 0 14 14"><circle cx="7" cy="8" r="4.6" fill="none" stroke="#2f7de0" stroke-width="1.5"/><path d="M7 8l2.5-2.5" stroke="#2f7de0" stroke-width="1.4"/><path d="M5.5 1.5h3M7 1.5v2" stroke="#2f7de0" stroke-width="1.3"/></svg>
<svg style="left:141px;top:759px;" width="12" height="12" viewBox="0 0 12 12"><path d="M1 0v11h11" stroke="#777" stroke-width="1.2" fill="none"/><path d="M3 3l2 5 2-3 2 2 2-5" stroke="#777" stroke-width="1" fill="none"/></svg>
<div class="t" style="left:160px;top:760.43px;font-size:11.3px;line-height:11.3px;color:#c8c8c8;font-weight:400;">Position</div>
<div class="t" style="left:270px;top:759.93px;font-size:11.3px;line-height:11.3px;color:#3d8ff0;font-weight:400;">509,9,376,0</div>
<svg style="left:424px;top:759px;" width="12" height="12" viewBox="0 0 12 12"><path d="M6.2 6.3a0.9 0.9 0 1 1 1-1.3 2.6 2.6 0 0 1-1.5 3.9A3.6 3.6 0 0 1 2.3 5.2 4.2 4.2 0 0 1 6.4 1.3a4.8 4.8 0 0 1 4.6 4.6A5 5 0 0 1 6 11" stroke="#6e6e6e" stroke-width="1.5" fill="none"/></svg>
<div style="left:1px;top:774px;width:536px;height:16px;background:#2e2e2e;"></div>
<div style="left:1px;top:790px;width:536px;height:1px;background:#121212;"></div>
<div style="left:6px;top:775px;width:13px;height:13px;background:#0e0e0e;border-radius:2px"></div>
<svg style="left:7px;top:778px;" width="11" height="7" viewBox="0 0 11 7"><path d="M0.5 3.5C3 0 8 0 10.5 3.5 8 7 3 7 0.5 3.5z" fill="#e8e8e8"/><circle cx="5.5" cy="3.5" r="1.8" fill="#0e0e0e"/></svg>
<div style="left:36px;top:775px;width:12px;height:13px;background:#141414;"></div>
<div style="left:51px;top:775px;width:12px;height:13px;background:#141414;"></div>
<svg style="left:75px;top:779px;" width="10" height="7" viewBox="0 0 10 7"><path d="M1 1l4 4 4-4" stroke="#c8c8c8" stroke-width="1.5" fill="none"/></svg>
<div style="left:87px;top:776px;width:12px;height:12px;background:#b0acd8;"></div>
<div class="t" style="left:108px;top:777.19px;font-size:11px;line-height:11px;color:#c8c8c8;font-weight:400;">4</div>
<svg style="left:138px;top:777px;" width="13" height="10" viewBox="0 0 13 10"><rect x="0" y="0" width="13" height="10" rx="1" fill="#f4f4f4"/><rect x="3.5" y="1.5" width="6" height="7" fill="#1f6fd8"/><path d="M4 8l2-2.5 1.5 1.5 2-1v2z" fill="#fff"/></svg>
<div class="t" style="left:156px;top:777.19px;font-size:11px;line-height:11px;color:#c8c8c8;font-weight:400;">lut.png</div>
<svg style="left:269px;top:776px;" width="14" height="12" viewBox="0 0 14 12"><path d="M2.5 6.5a4.5 4.5 0 0 1 9 0z" fill="#d8d8d8"/><rect x="0" y="7.5" width="14" height="1.4" fill="#d8d8d8"/><rect x="6.2" y="6" width="1.6" height="5" fill="#d8d8d8"/><circle cx="5.2" cy="4.2" r="1" fill="#222"/><circle cx="8.8" cy="4.2" r="1" fill="#222"/></svg>
<div style="left:300px;top:775px;width:12px;height:13px;background:#1a1a1a;"></div>
<svg style="left:300px;top:775px;" width="12" height="13" viewBox="0 0 12 13"><path d="M1.5 12L10.5 1" stroke="#d8d8d8" stroke-width="1.3"/></svg>
<svg style="left:344px;top:775px;" width="15" height="15" viewBox="0 0 15 15"><circle cx="5.2" cy="9.8" r="4.6" fill="#222" stroke="#c8c8c8" stroke-width="1.1"/><circle cx="6.9" cy="8.1" r="4.6" fill="#222" stroke="#c8c8c8" stroke-width="1.1"/><circle cx="9.6" cy="5.4" r="4.8" fill="#454545" stroke="#c8c8c8" stroke-width="1.2"/></svg>
<div style="left:360px;top:775px;width:12px;height:13px;background:#1a1a1a;"></div>
<div style="left:375px;top:775px;width:12px;height:13px;background:#1a1a1a;"></div>
<svg style="left:410px;top:776px;" width="12" height="12" viewBox="0 0 12 12"><path d="M6.2 6.3a0.9 0.9 0 1 1 1-1.3 2.6 2.6 0 0 1-1.5 3.9A3.6 3.6 0 0 1 2.3 5.2 4.2 4.2 0 0 1 6.4 1.3a4.8 4.8 0 0 1 4.6 4.6A5 5 0 0 1 6 11" stroke="#6e6e6e" stroke-width="1.5" fill="none"/></svg>
<div style="left:428px;top:775px;width:89px;height:15px;background:#0e0e0e;border-radius:4px"></div>
<div class="t" style="left:436px;top:776.93px;font-size:11.3px;line-height:11.3px;color:#d8d8d8;font-weight:400;">None</div>
<svg style="left:499px;top:779px;" width="10" height="7" viewBox="0 0 10 7"><path d="M1 1l4 4 4-4" stroke="#d8d8d8" stroke-width="1.6" fill="none"/></svg>
<div style="left:1px;top:791px;width:536px;height:16px;background:#1f1f1f;"></div>
<div style="left:1px;top:807px;width:536px;height:1px;background:#121212;"></div>
<svg style="left:10px;top:795px;" width="7" height="9" viewBox="0 0 7 9"><path d="M6.5 0.5v8L0.5 4.5z" fill="#a8a8a8"/></svg>
<svg style="left:24px;top:795px;" width="9" height="9" viewBox="0 0 9 9"><path d="M4.5 0.7l3.8 3.8-3.8 3.8L0.7 4.5z" fill="none" stroke="#a8a8a8" stroke-width="1.2"/></svg>
<svg style="left:39px;top:795px;" width="7" height="9" viewBox="0 0 7 9"><path d="M0.5 0.5v8l6-4z" fill="#4a4a4a"/></svg>
<div style="left:122px;top:792px;width:14px;height:14px;background:#141414;border-radius:3px"></div>
<svg style="left:122px;top:792px;" width="14" height="14" viewBox="0 0 14 14"><circle cx="7" cy="8" r="4.6" fill="none" stroke="#2f7de0" stroke-width="1.5"/><path d="M7 8l2.5-2.5" stroke="#2f7de0" stroke-width="1.4"/><path d="M5.5 1.5h3M7 1.5v2" stroke="#2f7de0" stroke-width="1.3"/></svg>
<svg style="left:141px;top:793px;" width="12" height="12" viewBox="0 0 12 12"><path d="M1 0v11h11" stroke="#777" stroke-width="1.2" fill="none"/><path d="M3 3l2 5 2-3 2 2 2-5" stroke="#777" stroke-width="1" fill="none"/></svg>
<div class="t" style="left:160px;top:794.43px;font-size:11.3px;line-height:11.3px;color:#c8c8c8;font-weight:400;">Position</div>
<div class="t" style="left:270px;top:793.93px;font-size:11.3px;line-height:11.3px;color:#3d8ff0;font-weight:400;">963,0,376,0</div>
<svg style="left:424px;top:793px;" width="12" height="12" viewBox="0 0 12 12"><path d="M6.2 6.3a0.9 0.9 0 1 1 1-1.3 2.6 2.6 0 0 1-1.5 3.9A3.6 3.6 0 0 1 2.3 5.2 4.2 4.2 0 0 1 6.4 1.3a4.8 4.8 0 0 1 4.6 4.6A5 5 0 0 1 6 11" stroke="#6e6e6e" stroke-width="1.5" fill="none"/></svg>
<div style="left:1px;top:808px;width:536px;height:16px;background:#2e2e2e;"></div>
<div style="left:1px;top:824px;width:536px;height:1px;background:#121212;"></div>
<div style="left:6px;top:809px;width:13px;height:13px;background:#0e0e0e;border-radius:2px"></div>
<svg style="left:7px;top:812px;" width="11" height="7" viewBox="0 0 11 7"><path d="M0.5 3.5C3 0 8 0 10.5 3.5 8 7 3 7 0.5 3.5z" fill="#e8e8e8"/><circle cx="5.5" cy="3.5" r="1.8" fill="#0e0e0e"/></svg>
<div style="left:36px;top:809px;width:12px;height:13px;background:#141414;"></div>
<div style="left:51px;top:809px;width:12px;height:13px;background:#141414;"></div>
<svg style="left:75px;top:813px;" width="10" height="7" viewBox="0 0 10 7"><path d="M1 1l4 4 4-4" stroke="#c8c8c8" stroke-width="1.5" fill="none"/></svg>
<div style="left:87px;top:810px;width:12px;height:12px;background:#b0acd8;"></div>
<div class="t" style="left:108px;top:811.19px;font-size:11px;line-height:11px;color:#c8c8c8;font-weight:400;">5</div>
<svg style="left:138px;top:811px;" width="13" height="10" viewBox="0 0 13 10"><rect x="0" y="0" width="13" height="10" rx="1" fill="#f4f4f4"/><rect x="3.5" y="1.5" width="6" height="7" fill="#1f6fd8"/><path d="M4 8l2-2.5 1.5 1.5 2-1v2z" fill="#fff"/></svg>
<div class="t" style="left:156px;top:811.19px;font-size:11px;line-height:11px;color:#c8c8c8;font-weight:400;">lut.png</div>
<svg style="left:269px;top:810px;" width="14" height="12" viewBox="0 0 14 12"><path d="M2.5 6.5a4.5 4.5 0 0 1 9 0z" fill="#d8d8d8"/><rect x="0" y="7.5" width="14" height="1.4" fill="#d8d8d8"/><rect x="6.2" y="6" width="1.6" height="5" fill="#d8d8d8"/><circle cx="5.2" cy="4.2" r="1" fill="#222"/><circle cx="8.8" cy="4.2" r="1" fill="#222"/></svg>
<div style="left:300px;top:809px;width:12px;height:13px;background:#1a1a1a;"></div>
<svg style="left:300px;top:809px;" width="12" height="13" viewBox="0 0 12 13"><path d="M1.5 12L10.5 1" stroke="#d8d8d8" stroke-width="1.3"/></svg>
<svg style="left:344px;top:809px;" width="15" height="15" viewBox="0 0 15 15"><circle cx="5.2" cy="9.8" r="4.6" fill="#222" stroke="#c8c8c8" stroke-width="1.1"/><circle cx="6.9" cy="8.1" r="4.6" fill="#222" stroke="#c8c8c8" stroke-width="1.1"/><circle cx="9.6" cy="5.4" r="4.8" fill="#454545" stroke="#c8c8c8" stroke-width="1.2"/></svg>
<div style="left:360px;top:809px;width:12px;height:13px;background:#1a1a1a;"></div>
<div style="left:375px;top:809px;width:12px;height:13px;background:#1a1a1a;"></div>
<svg style="left:410px;top:810px;" width="12" height="12" viewBox="0 0 12 12"><path d="M6.2 6.3a0.9 0.9 0 1 1 1-1.3 2.6 2.6 0 0 1-1.5 3.9A3.6 3.6 0 0 1 2.3 5.2 4.2 4.2 0 0 1 6.4 1.3a4.8 4.8 0 0 1 4.6 4.6A5 5 0 0 1 6 11" stroke="#6e6e6e" stroke-width="1.5" fill="none"/></svg>
<div style="left:428px;top:809px;width:89px;height:15px;background:#0e0e0e;border-radius:4px"></div>
<div class="t" style="left:436px;top:810.93px;font-size:11.3px;line-height:11.3px;color:#d8d8d8;font-weight:400;">None</div>
<svg style="left:499px;top:813px;" width="10" height="7" viewBox="0 0 10 7"><path d="M1 1l4 4 4-4" stroke="#d8d8d8" stroke-width="1.6" fill="none"/></svg>
<div style="left:1px;top:825px;width:536px;height:16px;background:#1f1f1f;"></div>
<div style="left:1px;top:841px;width:536px;height:1px;background:#121212;"></div>
<svg style="left:10px;top:829px;" width="7" height="9" viewBox="0 0 7 9"><path d="M6.5 0.5v8L0.5 4.5z" fill="#a8a8a8"/></svg>
<svg style="left:24px;top:829px;" width="9" height="9" viewBox="0 0 9 9"><path d="M4.5 0.7l3.8 3.8-3.8 3.8L0.7 4.5z" fill="none" stroke="#a8a8a8" stroke-width="1.2"/></svg>
<svg style="left:39px;top:829px;" width="7" height="9" viewBox="0 0 7 9"><path d="M0.5 0.5v8l6-4z" fill="#a8a8a8"/></svg>
<div style="left:122px;top:826px;width:14px;height:14px;background:#141414;border-radius:3px"></div>
<svg style="left:122px;top:826px;" width="14" height="14" viewBox="0 0 14 14"><circle cx="7" cy="8" r="4.6" fill="none" stroke="#2f7de0" stroke-width="1.5"/><path d="M7 8l2.5-2.5" stroke="#2f7de0" stroke-width="1.4"/><path d="M5.5 1.5h3M7 1.5v2" stroke="#2f7de0" stroke-width="1.3"/></svg>
<svg style="left:141px;top:827px;" width="12" height="12" viewBox="0 0 12 12"><path d="M1 0v11h11" stroke="#777" stroke-width="1.2" fill="none"/><path d="M3 3l2 5 2-3 2 2 2-5" stroke="#777" stroke-width="1" fill="none"/></svg>
<div class="t" style="left:160px;top:828.43px;font-size:11.3px;line-height:11.3px;color:#c8c8c8;font-weight:400;">Position</div>
<div class="t" style="left:270px;top:827.93px;font-size:11.3px;line-height:11.3px;color:#3d8ff0;font-weight:400;">1171,8,376,0</div>
<svg style="left:424px;top:827px;" width="12" height="12" viewBox="0 0 12 12"><path d="M6.2 6.3a0.9 0.9 0 1 1 1-1.3 2.6 2.6 0 0 1-1.5 3.9A3.6 3.6 0 0 1 2.3 5.2 4.2 4.2 0 0 1 6.4 1.3a4.8 4.8 0 0 1 4.6 4.6A5 5 0 0 1 6 11" stroke="#6e6e6e" stroke-width="1.5" fill="none"/></svg>
<div style="left:1px;top:842px;width:536px;height:16px;background:#2e2e2e;"></div>
<div style="left:1px;top:858px;width:536px;height:1px;background:#121212;"></div>
<div style="left:6px;top:843px;width:13px;height:13px;background:#0e0e0e;border-radius:2px"></div>
<svg style="left:7px;top:846px;" width="11" height="7" viewBox="0 0 11 7"><path d="M0.5 3.5C3 0 8 0 10.5 3.5 8 7 3 7 0.5 3.5z" fill="#e8e8e8"/><circle cx="5.5" cy="3.5" r="1.8" fill="#0e0e0e"/></svg>
<div style="left:36px;top:843px;width:12px;height:13px;background:#141414;"></div>
<div style="left:51px;top:843px;width:12px;height:13px;background:#141414;"></div>
<svg style="left:75px;top:847px;" width="10" height="7" viewBox="0 0 10 7"><path d="M1 1l4 4 4-4" stroke="#c8c8c8" stroke-width="1.5" fill="none"/></svg>
<div style="left:87px;top:844px;width:12px;height:12px;background:#b0acd8;"></div>
<div class="t" style="left:108px;top:845.19px;font-size:11px;line-height:11px;color:#c8c8c8;font-weight:400;">6</div>
<svg style="left:138px;top:845px;" width="13" height="10" viewBox="0 0 13 10"><rect x="0" y="0" width="13" height="10" rx="1" fill="#f4f4f4"/><rect x="3.5" y="1.5" width="6" height="7" fill="#1f6fd8"/><path d="M4 8l2-2.5 1.5 1.5 2-1v2z" fill="#fff"/></svg>
<div class="t" style="left:156px;top:845.19px;font-size:11px;line-height:11px;color:#c8c8c8;font-weight:400;">lut.png</div>
<svg style="left:269px;top:844px;" width="14" height="12" viewBox="0 0 14 12"><path d="M2.5 6.5a4.5 4.5 0 0 1 9 0z" fill="#d8d8d8"/><rect x="0" y="7.5" width="14" height="1.4" fill="#d8d8d8"/><rect x="6.2" y="6" width="1.6" height="5" fill="#d8d8d8"/><circle cx="5.2" cy="4.2" r="1" fill="#222"/><circle cx="8.8" cy="4.2" r="1" fill="#222"/></svg>
<div style="left:300px;top:843px;width:12px;height:13px;background:#1a1a1a;"></div>
<svg style="left:300px;top:843px;" width="12" height="13" viewBox="0 0 12 13"><path d="M1.5 12L10.5 1" stroke="#d8d8d8" stroke-width="1.3"/></svg>
<svg style="left:344px;top:843px;" width="15" height="15" viewBox="0 0 15 15"><circle cx="5.2" cy="9.8" r="4.6" fill="#222" stroke="#c8c8c8" stroke-width="1.1"/><circle cx="6.9" cy="8.1" r="4.6" fill="#222" stroke="#c8c8c8" stroke-width="1.1"/><circle cx="9.6" cy="5.4" r="4.8" fill="#454545" stroke="#c8c8c8" stroke-width="1.2"/></svg>
<div style="left:360px;top:843px;width:12px;height:13px;background:#1a1a1a;"></div>
<div style="left:375px;top:843px;width:12px;height:13px;background:#1a1a1a;"></div>
<svg style="left:410px;top:844px;" width="12" height="12" viewBox="0 0 12 12"><path d="M6.2 6.3a0.9 0.9 0 1 1 1-1.3 2.6 2.6 0 0 1-1.5 3.9A3.6 3.6 0 0 1 2.3 5.2 4.2 4.2 0 0 1 6.4 1.3a4.8 4.8 0 0 1 4.6 4.6A5 5 0 0 1 6 11" stroke="#6e6e6e" stroke-width="1.5" fill="none"/></svg>
<div style="left:428px;top:843px;width:89px;height:15px;background:#0e0e0e;border-radius:4px"></div>
<div class="t" style="left:436px;top:844.93px;font-size:11.3px;line-height:11.3px;color:#d8d8d8;font-weight:400;">None</div>
<svg style="left:499px;top:847px;" width="10" height="7" viewBox="0 0 10 7"><path d="M1 1l4 4 4-4" stroke="#d8d8d8" stroke-width="1.6" fill="none"/></svg>
<div style="left:1px;top:859px;width:536px;height:16px;background:#1f1f1f;"></div>
<div style="left:1px;top:875px;width:536px;height:1px;background:#121212;"></div>
<svg style="left:10px;top:863px;" width="7" height="9" viewBox="0 0 7 9"><path d="M6.5 0.5v8L0.5 4.5z" fill="#a8a8a8"/></svg>
<svg style="left:24px;top:863px;" width="9" height="9" viewBox="0 0 9 9"><path d="M4.5 0.7l3.8 3.8-3.8 3.8L0.7 4.5z" fill="none" stroke="#a8a8a8" stroke-width="1.2"/></svg>
<svg style="left:39px;top:863px;" width="7" height="9" viewBox="0 0 7 9"><path d="M0.5 0.5v8l6-4z" fill="#a8a8a8"/></svg>
<div style="left:122px;top:860px;width:14px;height:14px;background:#141414;border-radius:3px"></div>
<svg style="left:122px;top:860px;" width="14" height="14" viewBox="0 0 14 14"><circle cx="7" cy="8" r="4.6" fill="none" stroke="#2f7de0" stroke-width="1.5"/><path d="M7 8l2.5-2.5" stroke="#2f7de0" stroke-width="1.4"/><path d="M5.5 1.5h3M7 1.5v2" stroke="#2f7de0" stroke-width="1.3"/></svg>
<svg style="left:141px;top:861px;" width="12" height="12" viewBox="0 0 12 12"><path d="M1 0v11h11" stroke="#777" stroke-width="1.2" fill="none"/><path d="M3 3l2 5 2-3 2 2 2-5" stroke="#777" stroke-width="1" fill="none"/></svg>
<div class="t" style="left:160px;top:862.43px;font-size:11.3px;line-height:11.3px;color:#c8c8c8;font-weight:400;">Position</div>
<div class="t" style="left:270px;top:861.93px;font-size:11.3px;line-height:11.3px;color:#3d8ff0;font-weight:400;">1255,4,376,0</div>
<svg style="left:424px;top:861px;" width="12" height="12" viewBox="0 0 12 12"><path d="M6.2 6.3a0.9 0.9 0 1 1 1-1.3 2.6 2.6 0 0 1-1.5 3.9A3.6 3.6 0 0 1 2.3 5.2 4.2 4.2 0 0 1 6.4 1.3a4.8 4.8 0 0 1 4.6 4.6A5 5 0 0 1 6 11" stroke="#6e6e6e" stroke-width="1.5" fill="none"/></svg>
<div style="left:1px;top:876px;width:536px;height:16px;background:#2e2e2e;"></div>
<div style="left:1px;top:892px;width:536px;height:1px;background:#121212;"></div>
<div style="left:6px;top:877px;width:13px;height:13px;background:#0e0e0e;border-radius:2px"></div>
<svg style="left:7px;top:880px;" width="11" height="7" viewBox="0 0 11 7"><path d="M0.5 3.5C3 0 8 0 10.5 3.5 8 7 3 7 0.5 3.5z" fill="#e8e8e8"/><circle cx="5.5" cy="3.5" r="1.8" fill="#0e0e0e"/></svg>
<div style="left:36px;top:877px;width:12px;height:13px;background:#141414;"></div>
<div style="left:51px;top:877px;width:12px;height:13px;background:#141414;"></div>
<svg style="left:75px;top:881px;" width="10" height="7" viewBox="0 0 10 7"><path d="M1 1l4 4 4-4" stroke="#c8c8c8" stroke-width="1.5" fill="none"/></svg>
<div style="left:87px;top:878px;width:12px;height:12px;background:#b0acd8;"></div>
<div class="t" style="left:108px;top:879.19px;font-size:11px;line-height:11px;color:#c8c8c8;font-weight:400;">7</div>
<svg style="left:138px;top:879px;" width="13" height="10" viewBox="0 0 13 10"><rect x="0" y="0" width="13" height="10" rx="1" fill="#f4f4f4"/><rect x="3.5" y="1.5" width="6" height="7" fill="#1f6fd8"/><path d="M4 8l2-2.5 1.5 1.5 2-1v2z" fill="#fff"/></svg>
<div class="t" style="left:156px;top:879.19px;font-size:11px;line-height:11px;color:#c8c8c8;font-weight:400;">lut.png</div>
<svg style="left:269px;top:878px;" width="14" height="12" viewBox="0 0 14 12"><path d="M2.5 6.5a4.5 4.5 0 0 1 9 0z" fill="#d8d8d8"/><rect x="0" y="7.5" width="14" height="1.4" fill="#d8d8d8"/><rect x="6.2" y="6" width="1.6" height="5" fill="#d8d8d8"/><circle cx="5.2" cy="4.2" r="1" fill="#222"/><circle cx="8.8" cy="4.2" r="1" fill="#222"/></svg>
<div style="left:300px;top:877px;width:12px;height:13px;background:#1a1a1a;"></div>
<svg style="left:300px;top:877px;" width="12" height="13" viewBox="0 0 12 13"><path d="M1.5 12L10.5 1" stroke="#d8d8d8" stroke-width="1.3"/></svg>
<svg style="left:344px;top:877px;" width="15" height="15" viewBox="0 0 15 15"><circle cx="5.2" cy="9.8" r="4.6" fill="#222" stroke="#c8c8c8" stroke-width="1.1"/><circle cx="6.9" cy="8.1" r="4.6" fill="#222" stroke="#c8c8c8" stroke-width="1.1"/><circle cx="9.6" cy="5.4" r="4.8" fill="#454545" stroke="#c8c8c8" stroke-width="1.2"/></svg>
<div style="left:360px;top:877px;width:12px;height:13px;background:#1a1a1a;"></div>
<div style="left:375px;top:877px;width:12px;height:13px;background:#1a1a1a;"></div>
<svg style="left:410px;top:878px;" width="12" height="12" viewBox="0 0 12 12"><path d="M6.2 6.3a0.9 0.9 0 1 1 1-1.3 2.6 2.6 0 0 1-1.5 3.9A3.6 3.6 0 0 1 2.3 5.2 4.2 4.2 0 0 1 6.4 1.3a4.8 4.8 0 0 1 4.6 4.6A5 5 0 0 1 6 11" stroke="#6e6e6e" stroke-width="1.5" fill="none"/></svg>
<div style="left:428px;top:877px;width:89px;height:15px;background:#0e0e0e;border-radius:4px"></div>
<div class="t" style="left:436px;top:878.93px;font-size:11.3px;line-height:11.3px;color:#d8d8d8;font-weight:400;">None</div>
<svg style="left:499px;top:881px;" width="10" height="7" viewBox="0 0 10 7"><path d="M1 1l4 4 4-4" stroke="#d8d8d8" stroke-width="1.6" fill="none"/></svg>
<div style="left:1px;top:893px;width:536px;height:16px;background:#1f1f1f;"></div>
<div style="left:1px;top:909px;width:536px;height:1px;background:#121212;"></div>
<svg style="left:10px;top:897px;" width="7" height="9" viewBox="0 0 7 9"><path d="M6.5 0.5v8L0.5 4.5z" fill="#a8a8a8"/></svg>
<svg style="left:24px;top:897px;" width="9" height="9" viewBox="0 0 9 9"><path d="M4.5 0.7l3.8 3.8-3.8 3.8L0.7 4.5z" fill="none" stroke="#a8a8a8" stroke-width="1.2"/></svg>
<svg style="left:39px;top:897px;" width="7" height="9" viewBox="0 0 7 9"><path d="M0.5 0.5v8l6-4z" fill="#4a4a4a"/></svg>
<div style="left:122px;top:894px;width:14px;height:14px;background:#141414;border-radius:3px"></div>
<svg style="left:122px;top:894px;" width="14" height="14" viewBox="0 0 14 14"><circle cx="7" cy="8" r="4.6" fill="none" stroke="#2f7de0" stroke-width="1.5"/><path d="M7 8l2.5-2.5" stroke="#2f7de0" stroke-width="1.4"/><path d="M5.5 1.5h3M7 1.5v2" stroke="#2f7de0" stroke-width="1.3"/></svg>
<svg style="left:141px;top:895px;" width="12" height="12" viewBox="0 0 12 12"><path d="M1 0v11h11" stroke="#777" stroke-width="1.2" fill="none"/><path d="M3 3l2 5 2-3 2 2 2-5" stroke="#777" stroke-width="1" fill="none"/></svg>
<div class="t" style="left:160px;top:896.43px;font-size:11.3px;line-height:11.3px;color:#c8c8c8;font-weight:400;">Position</div>
<div class="t" style="left:270px;top:895.93px;font-size:11.3px;line-height:11.3px;color:#3d8ff0;font-weight:400;">963,0,376,0</div>
<svg style="left:424px;top:895px;" width="12" height="12" viewBox="0 0 12 12"><path d="M6.2 6.3a0.9 0.9 0 1 1 1-1.3 2.6 2.6 0 0 1-1.5 3.9A3.6 3.6 0 0 1 2.3 5.2 4.2 4.2 0 0 1 6.4 1.3a4.8 4.8 0 0 1 4.6 4.6A5 5 0 0 1 6 11" stroke="#6e6e6e" stroke-width="1.5" fill="none"/></svg>
<div style="left:1px;top:910px;width:536px;height:16px;background:#2e2e2e;"></div>
<div style="left:1px;top:926px;width:536px;height:1px;background:#121212;"></div>
<div style="left:6px;top:911px;width:13px;height:13px;background:#0e0e0e;border-radius:2px"></div>
<svg style="left:7px;top:914px;" width="11" height="7" viewBox="0 0 11 7"><path d="M0.5 3.5C3 0 8 0 10.5 3.5 8 7 3 7 0.5 3.5z" fill="#e8e8e8"/><circle cx="5.5" cy="3.5" r="1.8" fill="#0e0e0e"/></svg>
<div style="left:36px;top:911px;width:12px;height:13px;background:#141414;"></div>
<div style="left:51px;top:911px;width:12px;height:13px;background:#141414;"></div>
<svg style="left:75px;top:915px;" width="10" height="7" viewBox="0 0 10 7"><path d="M1 1l4 4 4-4" stroke="#c8c8c8" stroke-width="1.5" fill="none"/></svg>
<div style="left:87px;top:912px;width:12px;height:12px;background:#b0acd8;"></div>
<div class="t" style="left:108px;top:913.19px;font-size:11px;line-height:11px;color:#c8c8c8;font-weight:400;">8</div>
<svg style="left:138px;top:913px;" width="13" height="10" viewBox="0 0 13 10"><rect x="0" y="0" width="13" height="10" rx="1" fill="#f4f4f4"/><rect x="3.5" y="1.5" width="6" height="7" fill="#1f6fd8"/><path d="M4 8l2-2.5 1.5 1.5 2-1v2z" fill="#fff"/></svg>
<div class="t" style="left:156px;top:913.19px;font-size:11px;line-height:11px;color:#c8c8c8;font-weight:400;">lut.png</div>
<svg style="left:269px;top:912px;" width="14" height="12" viewBox="0 0 14 12"><path d="M2.5 6.5a4.5 4.5 0 0 1 9 0z" fill="#d8d8d8"/><rect x="0" y="7.5" width="14" height="1.4" fill="#d8d8d8"/><rect x="6.2" y="6" width="1.6" height="5" fill="#d8d8d8"/><circle cx="5.2" cy="4.2" r="1" fill="#222"/><circle cx="8.8" cy="4.2" r="1" fill="#222"/></svg>
<div style="left:300px;top:911px;width:12px;height:13px;background:#1a1a1a;"></div>
<svg style="left:300px;top:911px;" width="12" height="13" viewBox="0 0 12 13"><path d="M1.5 12L10.5 1" stroke="#d8d8d8" stroke-width="1.3"/></svg>
<svg style="left:344px;top:911px;" width="15" height="15" viewBox="0 0 15 15"><circle cx="5.2" cy="9.8" r="4.6" fill="#222" stroke="#c8c8c8" stroke-width="1.1"/><circle cx="6.9" cy="8.1" r="4.6" fill="#222" stroke="#c8c8c8" stroke-width="1.1"/><circle cx="9.6" cy="5.4" r="4.8" fill="#454545" stroke="#c8c8c8" stroke-width="1.2"/></svg>
<div style="left:360px;top:911px;width:12px;height:13px;background:#1a1a1a;"></div>
<div style="left:375px;top:911px;width:12px;height:13px;background:#1a1a1a;"></div>
<svg style="left:410px;top:912px;" width="12" height="12" viewBox="0 0 12 12"><path d="M6.2 6.3a0.9 0.9 0 1 1 1-1.3 2.6 2.6 0 0 1-1.5 3.9A3.6 3.6 0 0 1 2.3 5.2 4.2 4.2 0 0 1 6.4 1.3a4.8 4.8 0 0 1 4.6 4.6A5 5 0 0 1 6 11" stroke="#6e6e6e" stroke-width="1.5" fill="none"/></svg>
<div style="left:428px;top:911px;width:89px;height:15px;background:#0e0e0e;border-radius:4px"></div>
<div class="t" style="left:436px;top:912.93px;font-size:11.3px;line-height:11.3px;color:#d8d8d8;font-weight:400;">None</div>
<svg style="left:499px;top:915px;" width="10" height="7" viewBox="0 0 10 7"><path d="M1 1l4 4 4-4" stroke="#d8d8d8" stroke-width="1.6" fill="none"/></svg>
<div style="left:1px;top:927px;width:536px;height:16px;background:#1f1f1f;"></div>
<div style="left:1px;top:943px;width:536px;height:1px;background:#121212;"></div>
<svg style="left:10px;top:931px;" width="7" height="9" viewBox="0 0 7 9"><path d="M6.5 0.5v8L0.5 4.5z" fill="#a8a8a8"/></svg>
<svg style="left:24px;top:931px;" width="9" height="9" viewBox="0 0 9 9"><path d="M4.5 0.7l3.8 3.8-3.8 3.8L0.7 4.5z" fill="none" stroke="#a8a8a8" stroke-width="1.2"/></svg>
<svg style="left:39px;top:931px;" width="7" height="9" viewBox="0 0 7 9"><path d="M0.5 0.5v8l6-4z" fill="#a8a8a8"/></svg>
<div style="left:122px;top:928px;width:14px;height:14px;background:#141414;border-radius:3px"></div>
<svg style="left:122px;top:928px;" width="14" height="14" viewBox="0 0 14 14"><circle cx="7" cy="8" r="4.6" fill="none" stroke="#2f7de0" stroke-width="1.5"/><path d="M7 8l2.5-2.5" stroke="#2f7de0" stroke-width="1.4"/><path d="M5.5 1.5h3M7 1.5v2" stroke="#2f7de0" stroke-width="1.3"/></svg>
<svg style="left:141px;top:929px;" width="12" height="12" viewBox="0 0 12 12"><path d="M1 0v11h11" stroke="#777" stroke-width="1.2" fill="none"/><path d="M3 3l2 5 2-3 2 2 2-5" stroke="#777" stroke-width="1" fill="none"/></svg>
<div class="t" style="left:160px;top:930.43px;font-size:11.3px;line-height:11.3px;color:#c8c8c8;font-weight:400;">Position</div>
<div class="t" style="left:270px;top:929.93px;font-size:11.3px;line-height:11.3px;color:#3d8ff0;font-weight:400;">775,7,569,1</div>
<svg style="left:424px;top:929px;" width="12" height="12" viewBox="0 0 12 12"><path d="M6.2 6.3a0.9 0.9 0 1 1 1-1.3 2.6 2.6 0 0 1-1.5 3.9A3.6 3.6 0 0 1 2.3 5.2 4.2 4.2 0 0 1 6.4 1.3a4.8 4.8 0 0 1 4.6 4.6A5 5 0 0 1 6 11" stroke="#6e6e6e" stroke-width="1.5" fill="none"/></svg>
<div style="left:1px;top:944px;width:536px;height:16px;background:#2e2e2e;"></div>
<div style="left:1px;top:960px;width:536px;height:1px;background:#121212;"></div>
<div style="left:6px;top:945px;width:13px;height:13px;background:#0e0e0e;border-radius:2px"></div>
<svg style="left:7px;top:948px;" width="11" height="7" viewBox="0 0 11 7"><path d="M0.5 3.5C3 0 8 0 10.5 3.5 8 7 3 7 0.5 3.5z" fill="#e8e8e8"/><circle cx="5.5" cy="3.5" r="1.8" fill="#0e0e0e"/></svg>
<div style="left:36px;top:945px;width:12px;height:13px;background:#141414;"></div>
<div style="left:51px;top:945px;width:12px;height:13px;background:#141414;"></div>
<svg style="left:75px;top:949px;" width="10" height="7" viewBox="0 0 10 7"><path d="M1 1l4 4 4-4" stroke="#c8c8c8" stroke-width="1.5" fill="none"/></svg>
<div style="left:87px;top:946px;width:12px;height:12px;background:#b0acd8;"></div>
<div class="t" style="left:108px;top:947.19px;font-size:11px;line-height:11px;color:#c8c8c8;font-weight:400;">9</div>
<svg style="left:138px;top:947px;" width="13" height="10" viewBox="0 0 13 10"><rect x="0" y="0" width="13" height="10" rx="1" fill="#f4f4f4"/><rect x="3.5" y="1.5" width="6" height="7" fill="#1f6fd8"/><path d="M4 8l2-2.5 1.5 1.5 2-1v2z" fill="#fff"/></svg>
<div class="t" style="left:156px;top:947.19px;font-size:11px;line-height:11px;color:#c8c8c8;font-weight:400;">lut.png</div>
<svg style="left:269px;top:946px;" width="14" height="12" viewBox="0 0 14 12"><path d="M2.5 6.5a4.5 4.5 0 0 1 9 0z" fill="#d8d8d8"/><rect x="0" y="7.5" width="14" height="1.4" fill="#d8d8d8"/><rect x="6.2" y="6" width="1.6" height="5" fill="#d8d8d8"/><circle cx="5.2" cy="4.2" r="1" fill="#222"/><circle cx="8.8" cy="4.2" r="1" fill="#222"/></svg>
<div style="left:300px;top:945px;width:12px;height:13px;background:#1a1a1a;"></div>
<svg style="left:300px;top:945px;" width="12" height="13" viewBox="0 0 12 13"><path d="M1.5 12L10.5 1" stroke="#d8d8d8" stroke-width="1.3"/></svg>
<svg style="left:344px;top:945px;" width="15" height="15" viewBox="0 0 15 15"><circle cx="5.2" cy="9.8" r="4.6" fill="#222" stroke="#c8c8c8" stroke-width="1.1"/><circle cx="6.9" cy="8.1" r="4.6" fill="#222" stroke="#c8c8c8" stroke-width="1.1"/><circle cx="9.6" cy="5.4" r="4.8" fill="#454545" stroke="#c8c8c8" stroke-width="1.2"/></svg>
<div style="left:360px;top:945px;width:12px;height:13px;background:#1a1a1a;"></div>
<div style="left:375px;top:945px;width:12px;height:13px;background:#1a1a1a;"></div>
<svg style="left:410px;top:946px;" width="12" height="12" viewBox="0 0 12 12"><path d="M6.2 6.3a0.9 0.9 0 1 1 1-1.3 2.6 2.6 0 0 1-1.5 3.9A3.6 3.6 0 0 1 2.3 5.2 4.2 4.2 0 0 1 6.4 1.3a4.8 4.8 0 0 1 4.6 4.6A5 5 0 0 1 6 11" stroke="#6e6e6e" stroke-width="1.5" fill="none"/></svg>
<div style="left:428px;top:945px;width:89px;height:15px;background:#0e0e0e;border-radius:4px"></div>
<div class="t" style="left:436px;top:946.93px;font-size:11.3px;line-height:11.3px;color:#d8d8d8;font-weight:400;">None</div>
<svg style="left:499px;top:949px;" width="10" height="7" viewBox="0 0 10 7"><path d="M1 1l4 4 4-4" stroke="#d8d8d8" stroke-width="1.6" fill="none"/></svg>
<div style="left:1px;top:961px;width:536px;height:16px;background:#1f1f1f;"></div>
<div style="left:1px;top:977px;width:536px;height:1px;background:#121212;"></div>
<svg style="left:10px;top:965px;" width="7" height="9" viewBox="0 0 7 9"><path d="M6.5 0.5v8L0.5 4.5z" fill="#a8a8a8"/></svg>
<svg style="left:24px;top:965px;" width="9" height="9" viewBox="0 0 9 9"><path d="M4.5 0.7l3.8 3.8-3.8 3.8L0.7 4.5z" fill="none" stroke="#a8a8a8" stroke-width="1.2"/></svg>
<svg style="left:39px;top:965px;" width="7" height="9" viewBox="0 0 7 9"><path d="M0.5 0.5v8l6-4z" fill="#a8a8a8"/></svg>
<div style="left:122px;top:962px;width:14px;height:14px;background:#141414;border-radius:3px"></div>
<svg style="left:122px;top:962px;" width="14" height="14" viewBox="0 0 14 14"><circle cx="7" cy="8" r="4.6" fill="none" stroke="#2f7de0" stroke-width="1.5"/><path d="M7 8l2.5-2.5" stroke="#2f7de0" stroke-width="1.4"/><path d="M5.5 1.5h3M7 1.5v2" stroke="#2f7de0" stroke-width="1.3"/></svg>
<svg style="left:141px;top:963px;" width="12" height="12" viewBox="0 0 12 12"><path d="M1 0v11h11" stroke="#777" stroke-width="1.2" fill="none"/><path d="M3 3l2 5 2-3 2 2 2-5" stroke="#777" stroke-width="1" fill="none"/></svg>
<div class="t" style="left:160px;top:964.43px;font-size:11.3px;line-height:11.3px;color:#c8c8c8;font-weight:400;">Position</div>
<div class="t" style="left:270px;top:963.93px;font-size:11.3px;line-height:11.3px;color:#3d8ff0;font-weight:400;">963,0,609,6</div>
<svg style="left:424px;top:963px;" width="12" height="12" viewBox="0 0 12 12"><path d="M6.2 6.3a0.9 0.9 0 1 1 1-1.3 2.6 2.6 0 0 1-1.5 3.9A3.6 3.6 0 0 1 2.3 5.2 4.2 4.2 0 0 1 6.4 1.3a4.8 4.8 0 0 1 4.6 4.6A5 5 0 0 1 6 11" stroke="#6e6e6e" stroke-width="1.5" fill="none"/></svg>
<div style="left:1px;top:978px;width:536px;height:16px;background:#2e2e2e;"></div>
<div style="left:1px;top:994px;width:536px;height:1px;background:#121212;"></div>
<div style="left:6px;top:979px;width:13px;height:13px;background:#0e0e0e;border-radius:2px"></div>
<svg style="left:7px;top:982px;" width="11" height="7" viewBox="0 0 11 7"><path d="M0.5 3.5C3 0 8 0 10.5 3.5 8 7 3 7 0.5 3.5z" fill="#e8e8e8"/><circle cx="5.5" cy="3.5" r="1.8" fill="#0e0e0e"/></svg>
<div style="left:36px;top:979px;width:12px;height:13px;background:#141414;"></div>
<div style="left:51px;top:979px;width:12px;height:13px;background:#141414;"></div>
<svg style="left:75px;top:983px;" width="10" height="7" viewBox="0 0 10 7"><path d="M1 1l4 4 4-4" stroke="#c8c8c8" stroke-width="1.5" fill="none"/></svg>
<div style="left:87px;top:980px;width:12px;height:12px;background:#b0acd8;"></div>
<div class="t" style="left:106px;top:981.19px;font-size:11px;line-height:11px;color:#c8c8c8;font-weight:400;">10</div>
<svg style="left:138px;top:981px;" width="13" height="10" viewBox="0 0 13 10"><rect x="0" y="0" width="13" height="10" rx="1" fill="#f4f4f4"/><rect x="3.5" y="1.5" width="6" height="7" fill="#1f6fd8"/><path d="M4 8l2-2.5 1.5 1.5 2-1v2z" fill="#fff"/></svg>
<div class="t" style="left:156px;top:981.19px;font-size:11px;line-height:11px;color:#c8c8c8;font-weight:400;">lut.png</div>
<svg style="left:269px;top:980px;" width="14" height="12" viewBox="0 0 14 12"><path d="M2.5 6.5a4.5 4.5 0 0 1 9 0z" fill="#d8d8d8"/><rect x="0" y="7.5" width="14" height="1.4" fill="#d8d8d8"/><rect x="6.2" y="6" width="1.6" height="5" fill="#d8d8d8"/><circle cx="5.2" cy="4.2" r="1" fill="#222"/><circle cx="8.8" cy="4.2" r="1" fill="#222"/></svg>
<div style="left:300px;top:979px;width:12px;height:13px;background:#1a1a1a;"></div>
<svg style="left:300px;top:979px;" width="12" height="13" viewBox="0 0 12 13"><path d="M1.5 12L10.5 1" stroke="#d8d8d8" stroke-width="1.3"/></svg>
<svg style="left:344px;top:979px;" width="15" height="15" viewBox="0 0 15 15"><circle cx="5.2" cy="9.8" r="4.6" fill="#222" stroke="#c8c8c8" stroke-width="1.1"/><circle cx="6.9" cy="8.1" r="4.6" fill="#222" stroke="#c8c8c8" stroke-width="1.1"/><circle cx="9.6" cy="5.4" r="4.8" fill="#454545" stroke="#c8c8c8" stroke-width="1.2"/></svg>
<div style="left:360px;top:979px;width:12px;height:13px;background:#1a1a1a;"></div>
<div style="left:375px;top:979px;width:12px;height:13px;background:#1a1a1a;"></div>
<svg style="left:410px;top:980px;" width="12" height="12" viewBox="0 0 12 12"><path d="M6.2 6.3a0.9 0.9 0 1 1 1-1.3 2.6 2.6 0 0 1-1.5 3.9A3.6 3.6 0 0 1 2.3 5.2 4.2 4.2 0 0 1 6.4 1.3a4.8 4.8 0 0 1 4.6 4.6A5 5 0 0 1 6 11" stroke="#6e6e6e" stroke-width="1.5" fill="none"/></svg>
<div style="left:428px;top:979px;width:89px;height:15px;background:#0e0e0e;border-radius:4px"></div>
<div class="t" style="left:436px;top:980.93px;font-size:11.3px;line-height:11.3px;color:#d8d8d8;font-weight:400;">None</div>
<svg style="left:499px;top:983px;" width="10" height="7" viewBox="0 0 10 7"><path d="M1 1l4 4 4-4" stroke="#d8d8d8" stroke-width="1.6" fill="none"/></svg>
<div style="left:1px;top:995px;width:536px;height:16px;background:#1f1f1f;"></div>
<div style="left:1px;top:1011px;width:536px;height:1px;background:#121212;"></div>
<svg style="left:10px;top:999px;" width="7" height="9" viewBox="0 0 7 9"><path d="M6.5 0.5v8L0.5 4.5z" fill="#a8a8a8"/></svg>
<svg style="left:24px;top:999px;" width="9" height="9" viewBox="0 0 9 9"><path d="M4.5 0.7l3.8 3.8-3.8 3.8L0.7 4.5z" fill="none" stroke="#a8a8a8" stroke-width="1.2"/></svg>
<svg style="left:39px;top:999px;" width="7" height="9" viewBox="0 0 7 9"><path d="M0.5 0.5v8l6-4z" fill="#4a4a4a"/></svg>
<div style="left:122px;top:996px;width:14px;height:14px;background:#141414;border-radius:3px"></div>
<svg style="left:122px;top:996px;" width="14" height="14" viewBox="0 0 14 14"><circle cx="7" cy="8" r="4.6" fill="none" stroke="#2f7de0" stroke-width="1.5"/><path d="M7 8l2.5-2.5" stroke="#2f7de0" stroke-width="1.4"/><path d="M5.5 1.5h3M7 1.5v2" stroke="#2f7de0" stroke-width="1.3"/></svg>
<svg style="left:141px;top:997px;" width="12" height="12" viewBox="0 0 12 12"><path d="M1 0v11h11" stroke="#777" stroke-width="1.2" fill="none"/><path d="M3 3l2 5 2-3 2 2 2-5" stroke="#777" stroke-width="1" fill="none"/></svg>
<div class="t" style="left:160px;top:998.43px;font-size:11.3px;line-height:11.3px;color:#c8c8c8;font-weight:400;">Position</div>
<div class="t" style="left:270px;top:997.93px;font-size:11.3px;line-height:11.3px;color:#3d8ff0;font-weight:400;">963,0,376,0</div>
<svg style="left:424px;top:997px;" width="12" height="12" viewBox="0 0 12 12"><path d="M6.2 6.3a0.9 0.9 0 1 1 1-1.3 2.6 2.6 0 0 1-1.5 3.9A3.6 3.6 0 0 1 2.3 5.2 4.2 4.2 0 0 1 6.4 1.3a4.8 4.8 0 0 1 4.6 4.6A5 5 0 0 1 6 11" stroke="#6e6e6e" stroke-width="1.5" fill="none"/></svg>
<div style="left:537px;top:610px;width:1px;height:402px;background:#0e0e0e;"></div>
<div style="left:538px;top:640px;width:1357px;height:8px;background:#6c6c6c;"></div>
<svg style="left:538px;top:640px;" width="7" height="8" viewBox="0 0 7 8"><path d="M7 0H5a4 4 0 0 0 0 8h2z" fill="#3d9bff"/></svg>
<svg style="left:1894px;top:640px;" width="7" height="8" viewBox="0 0 7 8"><path d="M0 0h2a4 4 0 0 1 0 8H0z" fill="#3d9bff"/></svg>
<div style="left:545px;top:663px;width:1px;height:5px;background:#9a9a9a;"></div>
<div style="left:609px;top:663px;width:1px;height:5px;background:#9a9a9a;"></div>
<div style="left:672px;top:663px;width:1px;height:5px;background:#9a9a9a;"></div>
<div style="left:736px;top:663px;width:1px;height:5px;background:#9a9a9a;"></div>
<div style="left:800px;top:663px;width:1px;height:5px;background:#9a9a9a;"></div>
<div style="left:864px;top:663px;width:1px;height:5px;background:#9a9a9a;"></div>
<div style="left:927px;top:663px;width:1px;height:5px;background:#9a9a9a;"></div>
<div style="left:991px;top:663px;width:1px;height:5px;background:#9a9a9a;"></div>
<div style="left:1055px;top:663px;width:1px;height:5px;background:#9a9a9a;"></div>
<div style="left:1118px;top:663px;width:1px;height:5px;background:#9a9a9a;"></div>
<div style="left:1182px;top:663px;width:1px;height:5px;background:#9a9a9a;"></div>
<div style="left:1246px;top:663px;width:1px;height:5px;background:#9a9a9a;"></div>
<div style="left:1309px;top:663px;width:1px;height:5px;background:#9a9a9a;"></div>
<div style="left:1373px;top:663px;width:1px;height:5px;background:#9a9a9a;"></div>
<div style="left:1437px;top:663px;width:1px;height:5px;background:#9a9a9a;"></div>
<div style="left:1500px;top:663px;width:1px;height:5px;background:#9a9a9a;"></div>
<div style="left:1564px;top:663px;width:1px;height:5px;background:#9a9a9a;"></div>
<div style="left:1628px;top:663px;width:1px;height:5px;background:#9a9a9a;"></div>
<div style="left:1692px;top:663px;width:1px;height:5px;background:#9a9a9a;"></div>
<div style="left:1755px;top:663px;width:1px;height:5px;background:#9a9a9a;"></div>
<div style="left:1819px;top:663px;width:1px;height:5px;background:#9a9a9a;"></div>
<div style="left:1883px;top:663px;width:1px;height:5px;background:#9a9a9a;"></div>
<div style="left:537px;top:650px;width:1364px;height:13px;overflow:hidden"><div class="t" style="position:absolute;left:-1.0px;top:1.11px;font-size:10.5px;line-height:10.5px;color:#c8c8c8;letter-spacing:-0.3px">0:00f</div><div class="t" style="position:absolute;left:63.3px;top:1.11px;font-size:10.5px;line-height:10.5px;color:#c8c8c8;letter-spacing:-0.3px">10f</div><div class="t" style="position:absolute;left:127.0px;top:1.11px;font-size:10.5px;line-height:10.5px;color:#c8c8c8;letter-spacing:-0.3px">20f</div><div class="t" style="position:absolute;left:190.7px;top:1.11px;font-size:10.5px;line-height:10.5px;color:#c8c8c8;letter-spacing:-0.3px">30f</div><div class="t" style="position:absolute;left:254.4px;top:1.11px;font-size:10.5px;line-height:10.5px;color:#c8c8c8;letter-spacing:-0.3px">40f</div><div class="t" style="position:absolute;left:318.1px;top:1.11px;font-size:10.5px;line-height:10.5px;color:#c8c8c8;letter-spacing:-0.3px">50f</div><div class="t" style="position:absolute;left:374.4px;top:1.11px;font-size:10.5px;line-height:10.5px;color:#c8c8c8;letter-spacing:-0.3px">01:00f</div><div class="t" style="position:absolute;left:445.5px;top:1.11px;font-size:10.5px;line-height:10.5px;color:#c8c8c8;letter-spacing:-0.3px">10f</div><div class="t" style="position:absolute;left:509.2px;top:1.11px;font-size:10.5px;line-height:10.5px;color:#c8c8c8;letter-spacing:-0.3px">20f</div><div class="t" style="position:absolute;left:572.9px;top:1.11px;font-size:10.5px;line-height:10.5px;color:#c8c8c8;letter-spacing:-0.3px">30f</div><div class="t" style="position:absolute;left:636.6px;top:1.11px;font-size:10.5px;line-height:10.5px;color:#c8c8c8;letter-spacing:-0.3px">40f</div><div class="t" style="position:absolute;left:700.3px;top:1.11px;font-size:10.5px;line-height:10.5px;color:#c8c8c8;letter-spacing:-0.3px">50f</div><div class="t" style="position:absolute;left:756.6px;top:1.11px;font-size:10.5px;line-height:10.5px;color:#c8c8c8;letter-spacing:-0.3px">02:00f</div><div class="t" style="position:absolute;left:827.7px;top:1.11px;font-size:10.5px;line-height:10.5px;color:#c8c8c8;letter-spacing:-0.3px">10f</div><div class="t" style="position:absolute;left:891.4px;top:1.11px;font-size:10.5px;line-height:10.5px;color:#c8c8c8;letter-spacing:-0.3px">20f</div><div class="t" style="position:absolute;left:955.1px;top:1.11px;font-size:10.5px;line-height:10.5px;color:#c8c8c8;letter-spacing:-0.3px">30f</div><div class="t" style="position:absolute;left:1018.8px;top:1.11px;font-size:10.5px;line-height:10.5px;color:#c8c8c8;letter-spacing:-0.3px">40f</div><div class="t" style="position:absolute;left:1082.5px;top:1.11px;font-size:10.5px;line-height:10.5px;color:#c8c8c8;letter-spacing:-0.3px">50f</div><div class="t" style="position:absolute;left:1138.8px;top:1.11px;font-size:10.5px;line-height:10.5px;color:#c8c8c8;letter-spacing:-0.3px">03:00f</div><div class="t" style="position:absolute;left:1209.9px;top:1.11px;font-size:10.5px;line-height:10.5px;color:#c8c8c8;letter-spacing:-0.3px">10f</div><div class="t" style="position:absolute;left:1273.6px;top:1.11px;font-size:10.5px;line-height:10.5px;color:#c8c8c8;letter-spacing:-0.3px">20f</div><div class="t" style="position:absolute;left:1337.3px;top:1.11px;font-size:10.5px;line-height:10.5px;color:#c8c8c8;letter-spacing:-0.3px">30f</div></div>
<div style="left:545px;top:669px;width:1350px;height:15px;background:#6c6c6c;"></div>
<div style="left:537px;top:684px;width:1364px;height:4px;background:#1c1c1c;"></div>
<svg style="left:538px;top:669px;" width="7" height="15" viewBox="0 0 7 15"><path d="M7 0H5C2 0 0 2 0 5v5c0 3 2 5 5 5h2z" fill="#3d9bff"/></svg>
<svg style="left:1894px;top:669px;" width="7" height="15" viewBox="0 0 7 15"><path d="M0 0h2c3 0 5 2 5 5v5c0 3-2 5-5 5H0z" fill="#3d9bff"/></svg>
<svg style="left:1905px;top:671px;" width="12" height="15" viewBox="0 0 12 15"><path d="M0 0h12v9l-6 6-6-6z" fill="#c8c8c8"/></svg>
<div style="left:783px;top:685px;width:6px;height:2px;background:#0000e0;"></div>
<div style="left:857px;top:685px;width:6px;height:2px;background:#0000e0;"></div>
<div style="left:1221px;top:685px;width:6px;height:2px;background:#00c800;"></div>
<div style="left:1297px;top:685px;width:6px;height:2px;background:#00c800;"></div>
<div style="left:537px;top:688px;width:1364px;height:1px;background:#141414;"></div>
<div style="left:538px;top:689px;width:1363px;height:16px;background:#373737;"></div>
<div style="left:538px;top:689px;width:7px;height:16px;background:#303030;"></div>
<div style="left:545px;top:689px;width:1349px;height:16px;background:#7a3a3b;"></div>
<div style="left:538px;top:705px;width:1363px;height:1px;background:#121212;"></div>
<div style="left:538px;top:706px;width:1363px;height:16px;background:#373737;"></div>
<div style="left:538px;top:706px;width:7px;height:16px;background:#303030;"></div>
<div style="left:609px;top:706px;width:1292px;height:16px;background:#737188;"></div>
<div style="left:538px;top:722px;width:1363px;height:1px;background:#121212;"></div>
<div style="left:538px;top:723px;width:1363px;height:16px;background:#262626;"></div>
<div style="left:538px;top:739px;width:1363px;height:1px;background:#121212;"></div>
<svg style="left:604px;top:726px;" width="10" height="10" viewBox="0 0 10 10"><path d="M0 0h10v2L6.5 5 10 8v2H0V8l3.5-3L0 2z" fill="#8e8e8e"/><path d="M0 0h5v10H0V8l3.5-3L0 2z" fill="#d4d4d4"/></svg>
<svg style="left:992px;top:726px;" width="10" height="10" viewBox="0 0 10 10"><path d="M0 0h10v2L6.5 5 10 8v2H0V8l3.5-3L0 2z" fill="#8e8e8e"/><path d="M0 0h5v10H0V8l3.5-3L0 2z" fill="#d4d4d4"/></svg>
<svg style="left:1176px;top:726px;" width="10" height="10" viewBox="0 0 10 10"><path d="M0 0h10v2L6.5 5 10 8v2H0V8l3.5-3L0 2z" fill="#8e8e8e"/><path d="M0 0h5v10H0V8l3.5-3L0 2z" fill="#d4d4d4"/></svg>
<svg style="left:1463px;top:726px;" width="10" height="10" viewBox="0 0 10 10"><path d="M0 0h10v2L6.5 5 10 8v2H0V8l3.5-3L0 2z" fill="#8e8e8e"/><path d="M0 0h5v10H0V8l3.5-3L0 2z" fill="#d4d4d4"/></svg>
<div style="left:538px;top:740px;width:1363px;height:16px;background:#373737;"></div>
<div style="left:538px;top:740px;width:7px;height:16px;background:#303030;"></div>
<div style="left:545px;top:740px;width:859px;height:16px;background:#737188;"></div>
<div style="left:538px;top:756px;width:1363px;height:1px;background:#121212;"></div>
<div style="left:538px;top:757px;width:1363px;height:16px;background:#262626;"></div>
<div style="left:538px;top:773px;width:1363px;height:1px;background:#121212;"></div>
<svg style="left:859px;top:760px;" width="10" height="10" viewBox="0 0 10 10"><path d="M0 0h10v2L6.5 5 10 8v2H0V8l3.5-3L0 2z" fill="#8e8e8e"/><path d="M0 0h5v10H0V8l3.5-3L0 2z" fill="#d4d4d4"/></svg>
<svg style="left:1380px;top:760px;" width="10" height="10" viewBox="0 0 10 10"><path d="M0 0h10v2L6.5 5 10 8v2H0V8l3.5-3L0 2z" fill="#8e8e8e"/><path d="M0 0h5v10H0V8l3.5-3L0 2z" fill="#d4d4d4"/></svg>
<div style="left:538px;top:774px;width:1363px;height:16px;background:#373737;"></div>
<div style="left:538px;top:774px;width:7px;height:16px;background:#303030;"></div>
<div style="left:577px;top:774px;width:827px;height:16px;background:#737188;"></div>
<div style="left:538px;top:790px;width:1363px;height:1px;background:#121212;"></div>
<div style="left:538px;top:791px;width:1363px;height:16px;background:#262626;"></div>
<div style="left:538px;top:807px;width:1363px;height:1px;background:#121212;"></div>
<svg style="left:859px;top:794px;" width="10" height="10" viewBox="0 0 10 10"><path d="M0 0h10v2L6.5 5 10 8v2H0V8l3.5-3L0 2z" fill="#8e8e8e"/><path d="M0 0h5v10H0V8l3.5-3L0 2z" fill="#d4d4d4"/></svg>
<svg style="left:1246px;top:794px;" width="10" height="10" viewBox="0 0 10 10"><path d="M0 0h10v2L6.5 5 10 8v2H0V8l3.5-3L0 2z" fill="#8e8e8e"/><path d="M0 0h5v10H0V8l3.5-3L0 2z" fill="#d4d4d4"/></svg>
<div style="left:538px;top:808px;width:1363px;height:16px;background:#373737;"></div>
<div style="left:538px;top:808px;width:7px;height:16px;background:#303030;"></div>
<div style="left:640px;top:808px;width:764px;height:16px;background:#737188;"></div>
<div style="left:538px;top:824px;width:1363px;height:1px;background:#121212;"></div>
<div style="left:538px;top:825px;width:1363px;height:16px;background:#262626;"></div>
<div style="left:538px;top:841px;width:1363px;height:1px;background:#121212;"></div>
<svg style="left:859px;top:828px;" width="10" height="10" viewBox="0 0 10 10"><path d="M0 0h10v2L6.5 5 10 8v2H0V8l3.5-3L0 2z" fill="#8e8e8e"/><path d="M0 0h5v10H0V8l3.5-3L0 2z" fill="#d4d4d4"/></svg>
<svg style="left:1367px;top:828px;" width="10" height="10" viewBox="0 0 10 10"><path d="M0 0h10v2L6.5 5 10 8v2H0V8l3.5-3L0 2z" fill="#8e8e8e"/><path d="M0 0h5v10H0V8l3.5-3L0 2z" fill="#d4d4d4"/></svg>
<div style="left:538px;top:842px;width:1363px;height:16px;background:#373737;"></div>
<div style="left:538px;top:842px;width:7px;height:16px;background:#303030;"></div>
<div style="left:672px;top:842px;width:732px;height:16px;background:#737188;"></div>
<div style="left:538px;top:858px;width:1363px;height:1px;background:#121212;"></div>
<div style="left:538px;top:859px;width:1363px;height:16px;background:#262626;"></div>
<div style="left:538px;top:875px;width:1363px;height:1px;background:#121212;"></div>
<svg style="left:859px;top:862px;" width="10" height="10" viewBox="0 0 10 10"><path d="M0 0h10v2L6.5 5 10 8v2H0V8l3.5-3L0 2z" fill="#8e8e8e"/><path d="M0 0h5v10H0V8l3.5-3L0 2z" fill="#d4d4d4"/></svg>
<svg style="left:1335px;top:862px;" width="10" height="10" viewBox="0 0 10 10"><path d="M0 0h10v2L6.5 5 10 8v2H0V8l3.5-3L0 2z" fill="#8e8e8e"/><path d="M0 0h5v10H0V8l3.5-3L0 2z" fill="#d4d4d4"/></svg>
<div style="left:538px;top:876px;width:1363px;height:16px;background:#373737;"></div>
<div style="left:538px;top:876px;width:7px;height:16px;background:#303030;"></div>
<div style="left:704px;top:876px;width:700px;height:16px;background:#737188;"></div>
<div style="left:538px;top:892px;width:1363px;height:1px;background:#121212;"></div>
<div style="left:538px;top:893px;width:1363px;height:16px;background:#262626;"></div>
<div style="left:538px;top:909px;width:1363px;height:1px;background:#121212;"></div>
<svg style="left:859px;top:896px;" width="10" height="10" viewBox="0 0 10 10"><path d="M0 0h10v2L6.5 5 10 8v2H0V8l3.5-3L0 2z" fill="#8e8e8e"/><path d="M0 0h5v10H0V8l3.5-3L0 2z" fill="#d4d4d4"/></svg>
<svg style="left:1176px;top:896px;" width="10" height="10" viewBox="0 0 10 10"><path d="M0 0h10v2L6.5 5 10 8v2H0V8l3.5-3L0 2z" fill="#8e8e8e"/><path d="M0 0h5v10H0V8l3.5-3L0 2z" fill="#d4d4d4"/></svg>
<div style="left:538px;top:910px;width:1363px;height:16px;background:#373737;"></div>
<div style="left:538px;top:910px;width:7px;height:16px;background:#303030;"></div>
<div style="left:736px;top:910px;width:668px;height:16px;background:#737188;"></div>
<div style="left:538px;top:926px;width:1363px;height:1px;background:#121212;"></div>
<div style="left:538px;top:927px;width:1363px;height:16px;background:#262626;"></div>
<div style="left:538px;top:943px;width:1363px;height:1px;background:#121212;"></div>
<svg style="left:859px;top:930px;" width="10" height="10" viewBox="0 0 10 10"><path d="M0 0h10v2L6.5 5 10 8v2H0V8l3.5-3L0 2z" fill="#8e8e8e"/><path d="M0 0h5v10H0V8l3.5-3L0 2z" fill="#d4d4d4"/></svg>
<svg style="left:1354px;top:930px;" width="10" height="10" viewBox="0 0 10 10"><path d="M0 0h10v2L6.5 5 10 8v2H0V8l3.5-3L0 2z" fill="#8e8e8e"/><path d="M0 0h5v10H0V8l3.5-3L0 2z" fill="#d4d4d4"/></svg>
<div style="left:538px;top:944px;width:1363px;height:16px;background:#373737;"></div>
<div style="left:538px;top:944px;width:7px;height:16px;background:#303030;"></div>
<div style="left:768px;top:944px;width:636px;height:16px;background:#737188;"></div>
<div style="left:538px;top:960px;width:1363px;height:1px;background:#121212;"></div>
<div style="left:538px;top:961px;width:1363px;height:16px;background:#262626;"></div>
<div style="left:538px;top:977px;width:1363px;height:1px;background:#121212;"></div>
<svg style="left:859px;top:964px;" width="10" height="10" viewBox="0 0 10 10"><path d="M0 0h10v2L6.5 5 10 8v2H0V8l3.5-3L0 2z" fill="#8e8e8e"/><path d="M0 0h5v10H0V8l3.5-3L0 2z" fill="#d4d4d4"/></svg>
<svg style="left:1380px;top:964px;" width="10" height="10" viewBox="0 0 10 10"><path d="M0 0h10v2L6.5 5 10 8v2H0V8l3.5-3L0 2z" fill="#8e8e8e"/><path d="M0 0h5v10H0V8l3.5-3L0 2z" fill="#d4d4d4"/></svg>
<div style="left:538px;top:978px;width:1363px;height:16px;background:#373737;"></div>
<div style="left:538px;top:978px;width:7px;height:16px;background:#303030;"></div>
<div style="left:800px;top:978px;width:604px;height:16px;background:#737188;"></div>
<div style="left:538px;top:994px;width:1363px;height:1px;background:#121212;"></div>
<div style="left:538px;top:995px;width:1363px;height:16px;background:#262626;"></div>
<div style="left:538px;top:1011px;width:1363px;height:1px;background:#121212;"></div>
<svg style="left:859px;top:998px;" width="10" height="10" viewBox="0 0 10 10"><path d="M0 0h10v2L6.5 5 10 8v2H0V8l3.5-3L0 2z" fill="#8e8e8e"/><path d="M0 0h5v10H0V8l3.5-3L0 2z" fill="#d4d4d4"/></svg>
<svg style="left:1278px;top:998px;" width="10" height="10" viewBox="0 0 10 10"><path d="M0 0h10v2L6.5 5 10 8v2H0V8l3.5-3L0 2z" fill="#8e8e8e"/><path d="M0 0h5v10H0V8l3.5-3L0 2z" fill="#d4d4d4"/></svg>
<div style="left:1894px;top:689px;width:7px;height:16px;background:#333;"></div>
<svg style="left:1902px;top:691px;" width="15" height="14" viewBox="0 0 15 14"><path d="M14 3H7L1 8l4 0a3 3 0 0 0 5 2h4z" fill="#c8c8c8"/><circle cx="7.5" cy="9" r="2.5" fill="#202020" stroke="#c8c8c8" stroke-width="1"/></svg>
<div style="left:1901px;top:706px;width:17px;height:279px;background:#505050;"></div>
<div style="left:824px;top:1011px;width:1064px;height:1px;background:#5a5a5a;"></div>
<div style="left:1296px;top:651px;width:1px;height:361px;background:#3d8ff0;"></div>
<svg style="left:1290px;top:652px;" width="13" height="16" viewBox="0 0 13 16"><path d="M1.5 0h10a1.5 1.5 0 0 1 1.5 1.5V9l-6.5 7L0 9V1.5A1.5 1.5 0 0 1 1.5 0z" fill="#3d8ff0"/></svg>
<div style="left:1px;top:1012px;width:1919px;height:1px;background:#141414;"></div>
<div style="left:6px;top:1014px;width:17px;height:15px;background:#3a3a3a;border-radius:3px"></div>
<svg style="left:9px;top:1016px;" width="12" height="12" viewBox="0 0 12 12"><rect x="0.5" y="0.5" width="7" height="7" fill="none" stroke="#c8c8c8"/><rect x="2.5" y="2.5" width="7" height="7" fill="#3a3a3a" stroke="#c8c8c8"/><rect x="4.5" y="4.5" width="7" height="7" fill="#3a3a3a" stroke="#c8c8c8"/></svg>
<svg style="left:28px;top:1016px;" width="12" height="12" viewBox="0 0 12 12"><circle cx="4.5" cy="4.5" r="4" fill="none" stroke="#c8c8c8" stroke-width="1.2"/><rect x="5" y="5" width="6.5" height="6.5" fill="#202020" stroke="#c8c8c8" stroke-width="1.2"/></svg>
<svg style="left:47px;top:1016px;" width="12" height="12" viewBox="0 0 12 12"><path d="M4 0.5C2 0.5 3 5 1 6 3 7 2 11.5 4 11.5M8 0.5c2 0 1 4.5 3 5.5-2 1-1 5.5-3 5.5" stroke="#c8c8c8" stroke-width="1.3" fill="none"/></svg>
<svg style="left:65px;top:1016px;" width="14" height="12" viewBox="0 0 14 12"><circle cx="5" cy="5" r="4.5" fill="#c8c8c8"/><rect x="0" y="9" width="11" height="2.5" fill="#c8c8c8"/><path d="M11 2v5M13 3l-2 2" stroke="#c8c8c8"/></svg>
<div class="t" style="left:105px;top:1017.86px;font-size:10.8px;line-height:10.8px;color:#c8c8c8;font-weight:400;">Frame Render Time:</div>
<div class="t" style="left:207px;top:1017.69px;font-size:11px;line-height:11px;color:#f26b3a;font-weight:400;">2,45s</div>
<div class="t" style="left:275px;top:1016.77px;font-size:10.9px;line-height:10.9px;color:#c8c8c8;font-weight:400;">Toggle Switches / Modes</div>
<svg style="left:543px;top:1018px;" width="11" height="6" viewBox="0 0 11 6"><path d="M0 6l3-3 2 1.5L8 1l3 5z" fill="#c8c8c8"/></svg>
<svg style="left:560px;top:1017px;" width="11" height="11" viewBox="0 0 11 11"><circle cx="5.5" cy="5.5" r="4.3" fill="none" stroke="#d8d8d8" stroke-width="1.6"/></svg>
<div style="left:575px;top:1022px;width:46px;height:1px;background:#555;"></div>
<svg style="left:626px;top:1016px;" width="16" height="9" viewBox="0 0 16 9"><path d="M0 9l4-5 3 2.5L11 1l5 8z" fill="#c8c8c8"/></svg>
</body></html>
